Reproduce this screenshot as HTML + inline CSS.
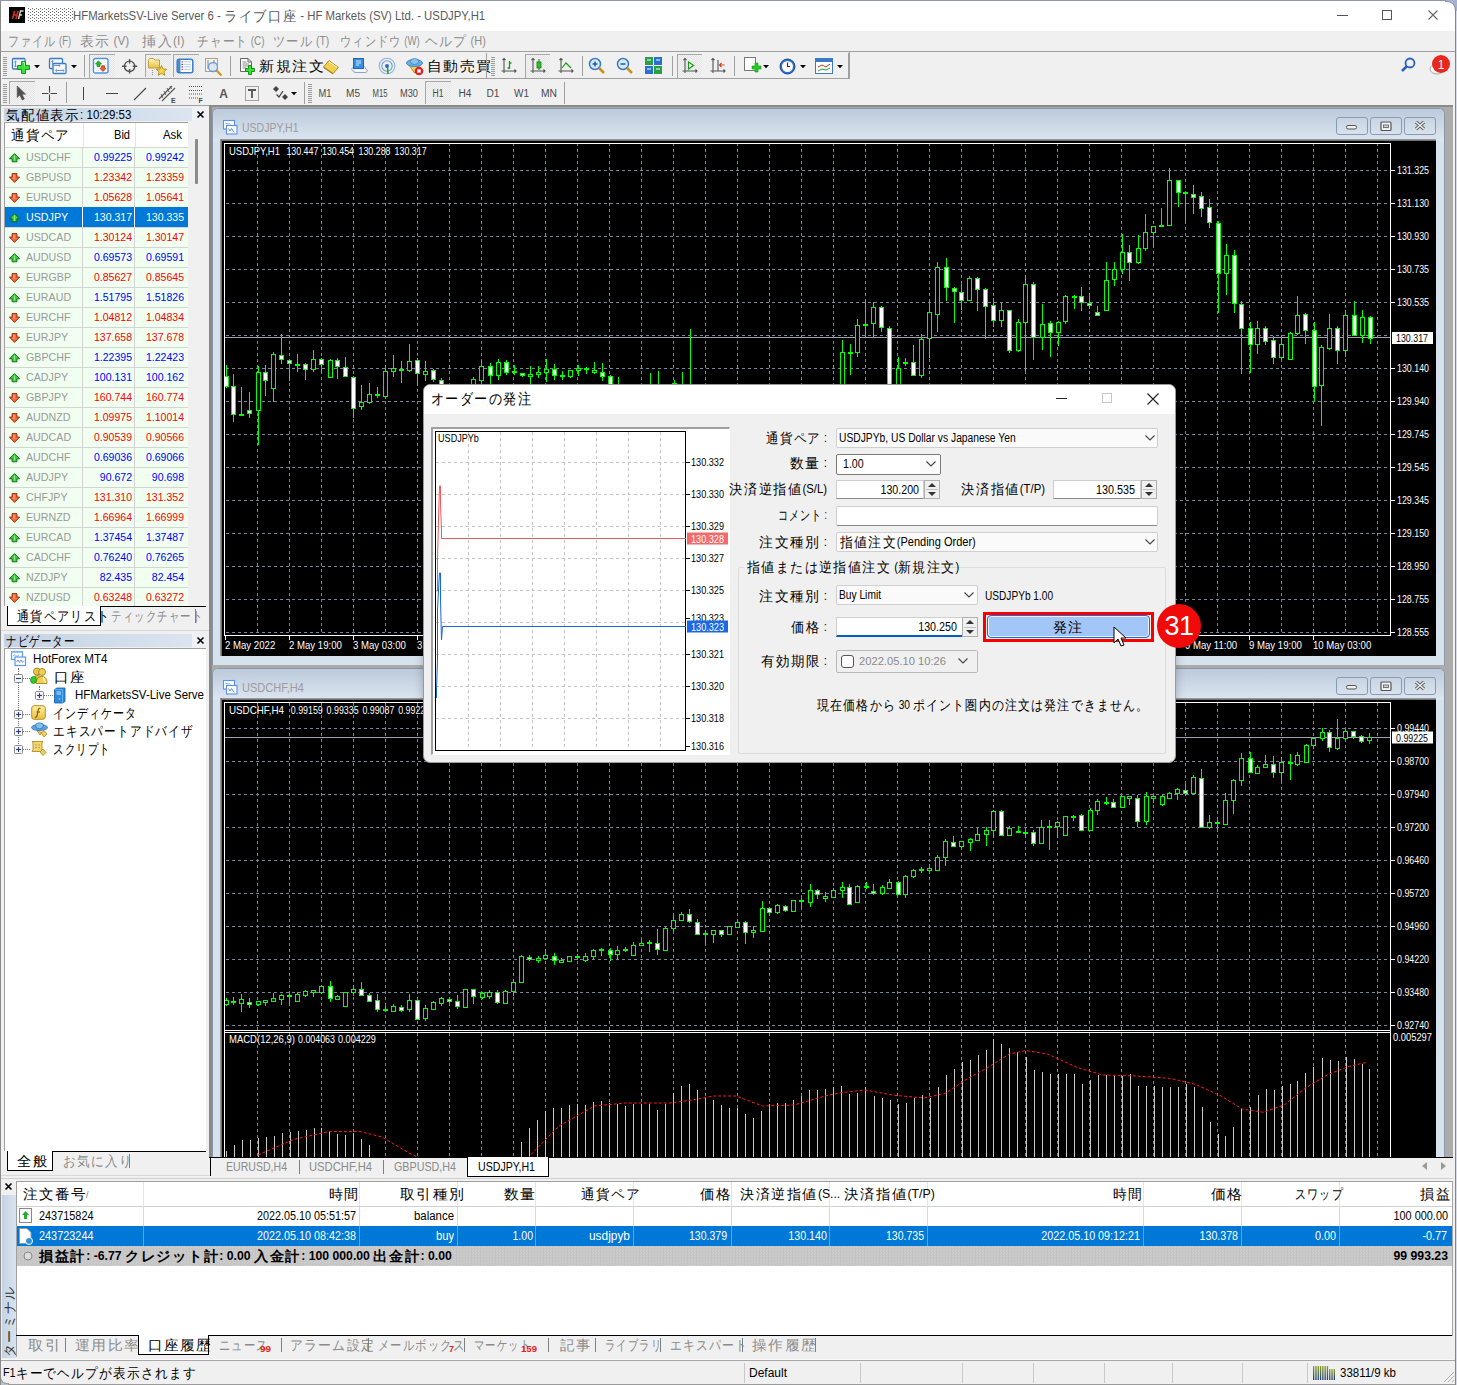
<!DOCTYPE html><html><head><meta charset="utf-8"><style>
*{margin:0;padding:0;box-sizing:border-box}
html,body{width:1457px;height:1385px;overflow:hidden;background:#f0f0f0;font-family:"Liberation Sans",sans-serif;font-size:11px;color:#000}
body>div,.a{position:absolute}
.j{font-size:1.2em;letter-spacing:.1em;vertical-align:-1px}
svg{position:absolute;overflow:visible}
</style></head><body>

<div style="left:0px;top:0px;width:1457px;height:31px;background:#fff"></div>
<div style="left:9px;top:7px;width:16px;height:16px;background:#050505"></div>
<svg style="left:9px;top:7px" width="16" height="16"><path d="M3.5 12L5.5 4M5 8H8M7 12L9 4" stroke="#d83020" stroke-width="1.5" fill="none"/><path d="M9.5 12L11.5 4H14.5M10.5 8H13" stroke="#d8d8d8" stroke-width="1.4" fill="none"/></svg>
<div style="left:28px;top:8px;width:46px;height:15px;background-image:radial-gradient(circle at 0.5px 0.5px,#6a6a6a 0.6px,transparent 0.9px),radial-gradient(circle at 0.5px 0.5px,#6a6a6a 0.6px,transparent 0.9px);background-size:4px 3px,4px 3px;background-position:0 0,2px 1px"></div>
<div style="left:73px;top:8.0px;line-height:16px;white-space:nowrap;transform-origin:0 0;transform:scaleX(0.9474);color:#5a5a5a;font-size:12px">HFMarketsSV-Live Server 6 - <span class="j">ライブ口座</span> - HF Markets (SV) Ltd. - USDJPY,H1</div>
<div style="left:1337px;top:15px;width:11px;height:1px;background:#555"></div>
<div style="left:1382px;top:10px;width:10px;height:10px;border:1px solid #555"></div>
<svg style="left:1427px;top:9px" width="12" height="12"><path d="M1.5 1.5L10.5 10.5M10.5 1.5L1.5 10.5" stroke="#666" stroke-width="1.1"/></svg>
<div style="left:0px;top:51px;width:1457px;height:1px;background:#a0a0a0"></div>
<div style="left:8px;top:33.0px;line-height:16px;white-space:nowrap;transform-origin:0 0;transform:scaleX(0.7839);color:#8d8d8d;font-size:12px"><span class="j">ファイル</span> (F)</div>
<div style="left:80px;top:33.0px;line-height:16px;white-space:nowrap;transform-origin:0 0;transform:scaleX(0.9815);color:#8d8d8d;font-size:12px"><span class="j">表示</span> (V)</div>
<div style="left:142px;top:33.0px;line-height:16px;white-space:nowrap;transform-origin:0 0;transform:scaleX(1.0054);color:#8d8d8d;font-size:12px"><span class="j">挿入</span>(I)</div>
<div style="left:197px;top:33.0px;line-height:16px;white-space:nowrap;transform-origin:0 0;transform:scaleX(0.8267);color:#8d8d8d;font-size:12px"><span class="j">チャート</span> (C)</div>
<div style="left:273px;top:33.0px;line-height:16px;white-space:nowrap;transform-origin:0 0;transform:scaleX(0.8668);color:#8d8d8d;font-size:12px"><span class="j">ツール</span> (T)</div>
<div style="left:340px;top:33.0px;line-height:16px;white-space:nowrap;transform-origin:0 0;transform:scaleX(0.7990);color:#8d8d8d;font-size:12px"><span class="j">ウィンドウ</span> (W)</div>
<div style="left:425px;top:33.0px;line-height:16px;white-space:nowrap;transform-origin:0 0;transform:scaleX(0.9169);color:#8d8d8d;font-size:12px"><span class="j">ヘルプ</span> (H)</div>
<div style="left:0px;top:78px;width:849px;height:1px;background:#a0a0a0"></div>
<div style="left:849px;top:52px;width:1px;height:27px;background:#a0a0a0"></div>
<div style="left:1px;top:52px;width:1px;height:27px;background:#fff"></div>
<svg style="left:3px;top:57px;" width="4" height="20" viewBox="0 0 4 20"><rect x="0" y="0" width="4" height="1" fill="#9a9a9a"/><rect x="0" y="2" width="4" height="1" fill="#9a9a9a"/><rect x="0" y="4" width="4" height="1" fill="#9a9a9a"/><rect x="0" y="6" width="4" height="1" fill="#9a9a9a"/><rect x="0" y="8" width="4" height="1" fill="#9a9a9a"/><rect x="0" y="10" width="4" height="1" fill="#9a9a9a"/><rect x="0" y="12" width="4" height="1" fill="#9a9a9a"/><rect x="0" y="14" width="4" height="1" fill="#9a9a9a"/><rect x="0" y="16" width="4" height="1" fill="#9a9a9a"/><rect x="0" y="18" width="4" height="1" fill="#9a9a9a"/></svg>
<svg style="left:11px;top:57px;" width="20" height="18" viewBox="0 0 20 18"><rect x="1.5" y="1.5" width="12.5" height="10.5" rx="1" fill="#f4f8fd" stroke="#3a7ccc" stroke-width="1.3"/><path d="M2 2.5H13.5" stroke="#9cc0ec"/><path d="M4.5 4V10M3.3 5.2L4.5 4L5.7 5.2M3.3 8.8L4.5 10L5.7 8.8" stroke="#6a8ab8" fill="none" stroke-width=".9"/><path d="M10.5 4.5H14.5V8.5H18.5V12.5H14.5V16.5H10.5V12.5H6.5V8.5H10.5Z" fill="#3ae03a" stroke="#0e8a0e" stroke-width=".9"/><path d="M11.5 5.5H13.5V9.5" stroke="#b0ffb0" stroke-width=".8" fill="none"/></svg>
<svg style="left:34px;top:65px;" width="6" height="4" viewBox="0 0 6 4"><path d="M0 0H6L3 3.2Z" fill="#000"/></svg>
<svg style="left:48px;top:57px;" width="20" height="18" viewBox="0 0 20 18"><rect x="1.5" y="1.5" width="13" height="10" rx="1" fill="#f4f8fd" stroke="#3a7ccc" stroke-width="1.3"/><rect x="5" y="6.5" width="13" height="10" rx="1" fill="#f4f8fd" stroke="#3a7ccc" stroke-width="1.3"/><path d="M4.5 3.5V9M4 8.5H12M10.8 7.3L12 8.5L10.8 9.7M3.3 4.7L4.5 3.5L5.7 4.7" stroke="#6a8ab8" fill="none" stroke-width=".9"/><path d="M7.5 13.5H16M8.7 12.3L7.5 13.5L8.7 14.7M14.8 12.3L16 13.5L14.8 14.7" stroke="#6a8ab8" fill="none" stroke-width=".9"/></svg>
<svg style="left:71px;top:65px;" width="6" height="4" viewBox="0 0 6 4"><path d="M0 0H6L3 3.2Z" fill="#000"/></svg>
<div style="left:84px;top:55px;width:1px;height:22px;background:#a0a0a0"></div>
<div style="left:89px;top:54px;width:26px;height:24px;border-top:1px solid #a8a8a8;border-left:1px solid #a8a8a8;background:repeating-conic-gradient(#f4f4f4 0 25%,#e4e4e4 0 50%) 0 0/2px 2px"></div>
<svg style="left:92px;top:57px;" width="18" height="18" viewBox="0 0 18 18"><rect x="1.5" y="1.5" width="14.5" height="14.5" rx="2" fill="#fff" stroke="#4a94e4" stroke-width="1.4"/><path d="M9 5H14M9 8H14M4 11H14M4 13.5H14" stroke="#dde4ec" stroke-width=".8"/><path d="M6.5 3.8L9.5 7H8V9.5H5V7H3.5Z" fill="#2ab82a" stroke="#138a13" stroke-width=".7"/><path d="M11 14.5L14 11.3H12.5V8.8H9.5V11.3H8Z" fill="#f05a30" stroke="#c03010" stroke-width=".7"/></svg>
<svg style="left:121px;top:58px;" width="18" height="18" viewBox="0 0 18 18"><circle cx="8.6" cy="8.3" r="5.2" fill="none" stroke="#505050" stroke-width="1.4"/><path d="M8.6 1V5.5M8.6 11V15.5M1 8.3H5.5M11.7 8.3H16.2" stroke="#505050" stroke-width="1.4"/></svg>
<div style="left:145px;top:54px;width:26px;height:23px;border-top:1px solid #a8a8a8;border-left:1px solid #a8a8a8;background:repeating-conic-gradient(#f4f4f4 0 25%,#e4e4e4 0 50%) 0 0/2px 2px"></div>
<svg style="left:147px;top:57px;" width="22" height="19" viewBox="0 0 22 19"><defs><linearGradient id="fg" x1="0" y1="0" x2="0" y2="1"><stop offset="0" stop-color="#fff4b8"/><stop offset="1" stop-color="#e8c040"/></linearGradient></defs><path d="M1.5 3.5C1.5 2.5 2 1.5 3 1.5H6.5L8 3H12.5V11H1.5Z" fill="url(#fg)" stroke="#b89838" stroke-width=".9"/><path d="M14.5 8.5L16 12L19.8 12.3L16.9 14.7L17.8 18.3L14.5 16.3L11.2 18.3L12.1 14.7L9.2 12.3L13 12Z" fill="#f5d848" stroke="#b08820" stroke-width=".9"/><path d="M5.5 13V13.5M5.5 15V15.5M5.5 17V17.5" stroke="#333"/></svg>
<div style="left:173px;top:54px;width:26px;height:23px;border-top:1px solid #a8a8a8;border-left:1px solid #a8a8a8;background:repeating-conic-gradient(#f4f4f4 0 25%,#e4e4e4 0 50%) 0 0/2px 2px"></div>
<svg style="left:176px;top:58px;" width="18" height="16" viewBox="0 0 18 16"><rect x="1.2" y="1.2" width="15.6" height="13.6" rx="2" fill="#fff" stroke="#3a7cc8" stroke-width="1.5"/><rect x="2" y="2" width="2.5" height="12" fill="#4a8ad0"/><path d="M7.5 3.8H15M7.5 6.3H15M7.5 8.8H15M7.5 11.3H15" stroke="#a8c8ec" stroke-width=".9"/><rect x="5.6" y="3.3" width="1.2" height="1.2" fill="#e82020"/><rect x="5.6" y="5.8" width="1.2" height="1.2" fill="#222"/><rect x="5.6" y="8.3" width="1.2" height="1.2" fill="#222"/><rect x="5.6" y="10.8" width="1.2" height="1.2" fill="#e82020"/></svg>
<svg style="left:204px;top:57px;" width="20" height="20" viewBox="0 0 20 20"><rect x="1.5" y="1.5" width="12" height="13" fill="#f6f2ec" stroke="#b0a088"/><path d="M4 3V12M10 3V10" stroke="#777" stroke-width=".9"/><circle cx="9" cy="10" r="4.5" fill="#dbe8f6" fill-opacity=".85" stroke="#6a9ad8" stroke-width="1.3"/><path d="M12.3 13.3L17.5 18.5" stroke="#c89a20" stroke-width="2.2"/></svg>
<div style="left:230px;top:56px;width:1px;height:20px;background:#a0a0a0"></div>
<svg style="left:239px;top:57px;" width="19" height="20" viewBox="0 0 19 20"><path d="M1.5 1.5H9L12.5 5V14.5H1.5Z" fill="#fafafa" stroke="#6a6a6a"/><path d="M9 1.5V5H12.5" fill="none" stroke="#6a6a6a"/><path d="M3.5 5H7.5M3.5 7H10M3.5 9H10M3.5 11H7" stroke="#777" stroke-width=".8"/><path d="M9.5 8.5H12.5V11.5H15.5V14.5H12.5V17.5H9.5V14.5H6.5V11.5H9.5Z" fill="#3ae03a" stroke="#0e8a0e" stroke-width=".9"/></svg>
<div style="left:258.5px;top:58.0px;line-height:16px;white-space:nowrap;transform-origin:0 0;transform:scaleX(1.0723);font-size:12px;color:#000"><span class="j">新規注文</span></div>
<svg style="left:322px;top:58px;" width="18" height="17" viewBox="0 0 18 17"><path d="M1.5 9L7 2.5L16.5 9.5L11 15.5Z" fill="#f0d050" stroke="#a07818" stroke-width=".9"/><path d="M1.5 9L11 15.5L11 16.5L1.5 10Z" fill="#a87818"/><path d="M7 3.5L15 9.3" stroke="#fff6c0" stroke-width="1"/></svg>
<svg style="left:350px;top:57px;" width="19" height="19" viewBox="0 0 19 19"><path d="M4 14C1 14 1 10.5 4 10.5C4.5 8 9 8 10 10C12 8.5 16 9.5 15.5 12C18 12 18 15.5 15 15.5H4.5Z" fill="#f0f4fa" stroke="#8a9cb8" stroke-width=".9"/><rect x="3.5" y="1.5" width="10" height="10" fill="#3a90e0" stroke="#1a5aa8" stroke-width=".9"/><path d="M6 4H11M6 6H11M6 8H9" stroke="#e8f2ff" stroke-width=".9"/></svg>
<svg style="left:378px;top:57px;" width="18" height="18" viewBox="0 0 18 18"><circle cx="9" cy="9" r="7.8" fill="none" stroke="#8ab4e0" stroke-width="1.1"/><circle cx="9" cy="9" r="5.2" fill="none" stroke="#6a9ad0" stroke-width="1.1"/><circle cx="9" cy="9" r="2" fill="#2a70c8"/><path d="M9.5 10L10 17" stroke="#30a030" stroke-width="1.6"/></svg>
<svg style="left:405px;top:57px;" width="19" height="19" viewBox="0 0 19 19"><path d="M4 8L9.5 16L15 8Z" fill="#f0d060" stroke="#a88020" stroke-width=".9"/><ellipse cx="9.5" cy="6" rx="8" ry="3.5" fill="#68b0e8" stroke="#3a78b8" stroke-width=".9"/><ellipse cx="9.5" cy="4.5" rx="4" ry="3" fill="#88c4f0" stroke="#3a78b8" stroke-width=".7"/><circle cx="14" cy="14" r="4.3" fill="#e02020"/><rect x="12.3" y="12.3" width="3.4" height="3.4" fill="#fff"/></svg>
<div style="left:427px;top:58.0px;line-height:16px;white-space:nowrap;transform-origin:0 0;transform:scaleX(1.0621);font-size:12px;color:#000"><span class="j">自動売買</span></div>
<div style="left:486px;top:53px;width:1px;height:25px;background:#a0a0a0"></div>
<svg style="left:491px;top:57px;" width="4" height="20" viewBox="0 0 4 20"><rect x="0" y="0" width="4" height="1" fill="#9a9a9a"/><rect x="0" y="2" width="4" height="1" fill="#9a9a9a"/><rect x="0" y="4" width="4" height="1" fill="#9a9a9a"/><rect x="0" y="6" width="4" height="1" fill="#9a9a9a"/><rect x="0" y="8" width="4" height="1" fill="#9a9a9a"/><rect x="0" y="10" width="4" height="1" fill="#9a9a9a"/><rect x="0" y="12" width="4" height="1" fill="#9a9a9a"/><rect x="0" y="14" width="4" height="1" fill="#9a9a9a"/><rect x="0" y="16" width="4" height="1" fill="#9a9a9a"/><rect x="0" y="18" width="4" height="1" fill="#9a9a9a"/></svg>
<svg style="left:500px;top:57px;" width="18" height="18" viewBox="0 0 18 18"><path d="M4 1.5V16M1.5 14H16M2.5 3L4 1.5L5.5 3M14.5 12.5L16 14L14.5 15.5" stroke="#555" stroke-width="1.1" fill="none"/><path d="M9.5 4V12M7.5 11H9.5M9.5 6H11.5" stroke="#1a9a1a" stroke-width="1.3"/></svg>
<div style="left:525px;top:54px;width:25px;height:24px;border-top:1px solid #a8a8a8;border-left:1px solid #a8a8a8;background:repeating-conic-gradient(#f4f4f4 0 25%,#e4e4e4 0 50%) 0 0/2px 2px"></div>
<svg style="left:529px;top:57px;" width="18" height="18" viewBox="0 0 18 18"><path d="M4 1.5V16M1.5 14H16M2.5 3L4 1.5L5.5 3M14.5 12.5L16 14L14.5 15.5" stroke="#555" stroke-width="1.1" fill="none"/><rect x="8" y="5" width="4" height="6" fill="#30c030" stroke="#0e7a0e" stroke-width=".8"/><path d="M10 2V5M10 11V13" stroke="#0e7a0e"/></svg>
<svg style="left:557px;top:57px;" width="18" height="18" viewBox="0 0 18 18"><path d="M4 1.5V16M1.5 14H16M2.5 3L4 1.5L5.5 3M14.5 12.5L16 14L14.5 15.5" stroke="#555" stroke-width="1.1" fill="none"/><path d="M5 11L9 6L14 11" stroke="#1a9a1a" fill="none" stroke-width="1.2"/></svg>
<div style="left:582px;top:56px;width:1px;height:20px;background:#a0a0a0"></div>
<svg style="left:588px;top:57px;" width="18" height="18" viewBox="0 0 18 18"><circle cx="7" cy="7" r="5.5" fill="#d8ecfb" stroke="#3a78c8" stroke-width="1.5"/><path d="M4.5 7h5M7 4.5v5" stroke="#1a58b0" stroke-width="1.5"/><path d="M11 11L16 16" stroke="#c8901a" stroke-width="2.5"/></svg>
<svg style="left:616px;top:57px;" width="18" height="18" viewBox="0 0 18 18"><circle cx="7" cy="7" r="5.5" fill="#d8ecfb" stroke="#3a78c8" stroke-width="1.5"/><path d="M4.5 7h5" stroke="#1a58b0" stroke-width="1.5"/><path d="M11 11L16 16" stroke="#c8901a" stroke-width="2.5"/></svg>
<svg style="left:645px;top:57px;" width="18" height="17" viewBox="0 0 18 17"><rect x="0" y="0" width="8" height="8" fill="#28a048"/><rect x="9" y="0" width="8" height="8" fill="#2a70d0"/><rect x="0" y="9" width="8" height="8" fill="#2a70d0"/><rect x="9" y="9" width="8" height="8" fill="#28a048"/><path d="M2 3h4M11 3h4M2 12h4M11 12h4" stroke="#fff"/></svg>
<div style="left:672px;top:56px;width:1px;height:20px;background:#a0a0a0"></div>
<div style="left:677px;top:54px;width:25px;height:24px;border-top:1px solid #a8a8a8;border-left:1px solid #a8a8a8;background:repeating-conic-gradient(#f4f4f4 0 25%,#e4e4e4 0 50%) 0 0/2px 2px"></div>
<svg style="left:681px;top:57px;" width="18" height="18" viewBox="0 0 18 18"><path d="M4 1.5V16M1.5 14H16M2.5 3L4 1.5L5.5 3M14.5 12.5L16 14L14.5 15.5" stroke="#555" stroke-width="1.1" fill="none"/><path d="M7.5 5V12L12.5 8.5Z" fill="#fff" stroke="#1a9a1a" stroke-width="1.2"/></svg>
<svg style="left:709px;top:57px;" width="18" height="18" viewBox="0 0 18 18"><path d="M4 1.5V16M1.5 14H16M2.5 3L4 1.5L5.5 3M14.5 12.5L16 14L14.5 15.5" stroke="#555" stroke-width="1.1" fill="none"/><path d="M9 3V14" stroke="#555" stroke-width="1.1"/><path d="M15.5 8H10.5M12.5 6L10.5 8L12.5 10" stroke="#d04020" stroke-width="1.2" fill="none"/></svg>
<div style="left:734px;top:56px;width:1px;height:20px;background:#a0a0a0"></div>
<svg style="left:744px;top:57px;" width="18" height="18" viewBox="0 0 18 18"><rect x="0.5" y="0.5" width="11" height="13" fill="#fff" stroke="#777"/><path d="M8 9h3V6h3v3h3v3h-3v3h-3v-3H8Z" fill="#22cc22" stroke="#119911" stroke-width=".6"/></svg>
<svg style="left:763px;top:65px;" width="6" height="4" viewBox="0 0 6 4"><path d="M0 0H6L3 3.2Z" fill="#000"/></svg>
<svg style="left:779px;top:58px;" width="17" height="17" viewBox="0 0 17 17"><circle cx="8.5" cy="8.5" r="7.5" fill="#2a70d0" stroke="#1a4a90"/><circle cx="8.5" cy="8.5" r="5.5" fill="#fff"/><path d="M8.5 4.5V8.5H11" stroke="#333" stroke-width="1.2" fill="none"/></svg>
<svg style="left:800px;top:65px;" width="6" height="4" viewBox="0 0 6 4"><path d="M0 0H6L3 3.2Z" fill="#000"/></svg>
<svg style="left:815px;top:58px;" width="18" height="16" viewBox="0 0 18 16"><rect x="0.5" y="0.5" width="17" height="15" fill="#fff" stroke="#3a78c8"/><rect x="1" y="1" width="16" height="3" fill="#3a78c8"/><path d="M3 9L7 7L11 9L15 6" stroke="#c04020" fill="none"/><path d="M3 13L7 11L11 12L15 10" stroke="#20a040" fill="none"/></svg>
<svg style="left:837px;top:65px;" width="6" height="4" viewBox="0 0 6 4"><path d="M0 0H6L3 3.2Z" fill="#000"/></svg>
<div style="left:848px;top:53px;width:1px;height:25px;background:#a0a0a0"></div>
<svg style="left:1400px;top:57px;" width="16" height="16" viewBox="0 0 16 16"><circle cx="10" cy="6" r="4.5" fill="none" stroke="#2a60c0" stroke-width="1.8"/><path d="M7 9L2 14" stroke="#2a60c0" stroke-width="2.5"/></svg>
<svg style="left:1425px;top:54px;" width="28" height="22" viewBox="0 0 28 22"><ellipse cx="12" cy="15" rx="7" ry="5" fill="#f4f4f4" stroke="#aaa"/><circle cx="16" cy="10" r="9" fill="#e8281c"/><text x="16" y="14.5" fill="#fff" font-size="12" font-family="Liberation Sans" text-anchor="middle">1</text></svg>
<div style="left:0px;top:105px;width:1457px;height:1px;background:#a0a0a0"></div>
<svg style="left:3px;top:84px;" width="4" height="19" viewBox="0 0 4 19"><rect x="0" y="0" width="4" height="1" fill="#9a9a9a"/><rect x="0" y="2" width="4" height="1" fill="#9a9a9a"/><rect x="0" y="4" width="4" height="1" fill="#9a9a9a"/><rect x="0" y="6" width="4" height="1" fill="#9a9a9a"/><rect x="0" y="8" width="4" height="1" fill="#9a9a9a"/><rect x="0" y="10" width="4" height="1" fill="#9a9a9a"/><rect x="0" y="12" width="4" height="1" fill="#9a9a9a"/><rect x="0" y="14" width="4" height="1" fill="#9a9a9a"/><rect x="0" y="16" width="4" height="1" fill="#9a9a9a"/><rect x="0" y="18" width="4" height="1" fill="#9a9a9a"/></svg>
<div style="left:9px;top:81px;width:26px;height:23px;border-top:1px solid #a8a8a8;border-left:1px solid #a8a8a8;background:repeating-conic-gradient(#f4f4f4 0 25%,#e4e4e4 0 50%) 0 0/2px 2px"></div>
<svg style="left:16px;top:85px;" width="10" height="16" viewBox="0 0 10 16"><path d="M1.2 1V12.5L3.8 10L6.2 15L8.4 14L6 9.2H9.6Z" fill="#505050" stroke="#505050" stroke-width=".6"/></svg>
<svg style="left:41px;top:85px;" width="17" height="17" viewBox="0 0 17 17"><path d="M8.5 1V7.5M8.5 9.5V16M1 8.5H7.5M9.5 8.5H16" stroke="#444" stroke-width="1.1"/></svg>
<div style="left:66px;top:82px;width:1px;height:21px;background:#a0a0a0"></div>
<div style="left:83px;top:87px;width:1px;height:13px;background:#444"></div>
<div style="left:106px;top:93px;width:12px;height:1px;background:#444"></div>
<svg style="left:133px;top:87px;" width="14" height="14" viewBox="0 0 14 14"><path d="M1 13L13 1" stroke="#444" stroke-width="1.1"/></svg>
<svg style="left:157px;top:84px;" width="22" height="19" viewBox="0 0 22 19"><path d="M2 15L15 2M5 17L18 4" stroke="#555" stroke-width="1.1"/><path d="M4 10L6 14M7 7L9 11M10 4L12 8M13 2L14.5 5" stroke="#555" stroke-width=".9"/><text x="14" y="18.5" font-size="7" font-family="Liberation Sans" font-weight="bold" fill="#444">E</text></svg>
<svg style="left:188px;top:84px;" width="17" height="19" viewBox="0 0 17 19"><path d="M1 2.5H14M1 6.5H14M1 10H14M1 14H10" stroke="#555" stroke-dasharray="1,1"/><text x="10.5" y="18.5" font-size="7" font-family="Liberation Sans" font-weight="bold" fill="#444">F</text></svg>
<div style="left:-76.5px;width:600px;text-align:center;top:86.5px;line-height:14px;white-space:nowrap;transform-origin:50% 0;font-size:12px;color:#555;font-weight:bold">A</div>
<svg style="left:244px;top:85px;" width="16" height="17" viewBox="0 0 16 17"><rect x="1.5" y="1.5" width="13" height="14" fill="none" stroke="#555" stroke-dasharray="1,1"/><path d="M4 5H12M8 5V13" stroke="#555" stroke-width="1.8"/></svg>
<svg style="left:272px;top:85px;" width="17" height="17" viewBox="0 0 17 17"><path d="M4 1L7 4L4 7L1 4Z" fill="#444"/><path d="M13 9L16 12L13 15L10 12Z" fill="#444"/><path d="M4.5 9.5L7 12L11 6" stroke="#444" stroke-width="1.3" fill="none"/></svg>
<svg style="left:291px;top:92px;" width="6" height="4" viewBox="0 0 6 4"><path d="M0 0H6L3 3.2Z" fill="#000"/></svg>
<div style="left:304px;top:82px;width:1px;height:22px;background:#a0a0a0"></div>
<svg style="left:308px;top:84px;" width="4" height="19" viewBox="0 0 4 19"><rect x="0" y="0" width="4" height="1" fill="#9a9a9a"/><rect x="0" y="2" width="4" height="1" fill="#9a9a9a"/><rect x="0" y="4" width="4" height="1" fill="#9a9a9a"/><rect x="0" y="6" width="4" height="1" fill="#9a9a9a"/><rect x="0" y="8" width="4" height="1" fill="#9a9a9a"/><rect x="0" y="10" width="4" height="1" fill="#9a9a9a"/><rect x="0" y="12" width="4" height="1" fill="#9a9a9a"/><rect x="0" y="14" width="4" height="1" fill="#9a9a9a"/><rect x="0" y="16" width="4" height="1" fill="#9a9a9a"/><rect x="0" y="18" width="4" height="1" fill="#9a9a9a"/></svg>
<div style="left:24.5px;width:600px;text-align:center;top:88.0px;line-height:12px;white-space:nowrap;transform-origin:50% 0;transform:scaleX(0.9359);font-size:10px;color:#4a4a4a">M1</div>
<div style="left:53px;width:600px;text-align:center;top:88.0px;line-height:12px;white-space:nowrap;transform-origin:50% 0;transform:scaleX(1.0079);font-size:10px;color:#4a4a4a">M5</div>
<div style="left:79.5px;width:600px;text-align:center;top:88.0px;line-height:12px;white-space:nowrap;transform-origin:50% 0;transform:scaleX(0.7711);font-size:10px;color:#4a4a4a">M15</div>
<div style="left:109px;width:600px;text-align:center;top:88.0px;line-height:12px;white-space:nowrap;transform-origin:50% 0;transform:scaleX(0.9254);font-size:10px;color:#4a4a4a">M30</div>
<div style="left:425px;top:81px;width:26px;height:23px;border-top:1px solid #a8a8a8;border-left:1px solid #a8a8a8;background:repeating-conic-gradient(#f4f4f4 0 25%,#e4e4e4 0 50%) 0 0/2px 2px"></div>
<div style="left:137.5px;width:600px;text-align:center;top:88.0px;line-height:12px;white-space:nowrap;transform-origin:50% 0;transform:scaleX(0.8605);font-size:10px;color:#4a4a4a">H1</div>
<div style="left:164.5px;width:600px;text-align:center;top:88.0px;line-height:12px;white-space:nowrap;transform-origin:50% 0;transform:scaleX(1.0170);font-size:10px;color:#4a4a4a">H4</div>
<div style="left:192.5px;width:600px;text-align:center;top:88.0px;line-height:12px;white-space:nowrap;transform-origin:50% 0;transform:scaleX(1.0170);font-size:10px;color:#4a4a4a">D1</div>
<div style="left:221.5px;width:600px;text-align:center;top:88.0px;line-height:12px;white-space:nowrap;transform-origin:50% 0;transform:scaleX(1.0000);font-size:10px;color:#4a4a4a">W1</div>
<div style="left:249px;width:600px;text-align:center;top:88.0px;line-height:12px;white-space:nowrap;transform-origin:50% 0;transform:scaleX(1.0288);font-size:10px;color:#4a4a4a">MN</div>
<div style="left:564px;top:82px;width:1px;height:22px;background:#a0a0a0"></div>
<div style="left:4px;top:108px;width:188px;height:13px;background:linear-gradient(90deg,#c4d3e3,#d3dfec 70%,#dbe5f0)"></div>
<div style="left:192px;top:108px;width:14px;height:13px;background:#eef2f7"></div>
<div style="left:6px;top:107.5px;line-height:14px;white-space:nowrap;transform-origin:0 0;transform:scaleX(0.9601);font-size:12px;color:#000"><span class="j">気配値表示</span>: 10:29:53</div>
<svg style="left:197px;top:111px;" width="7" height="7" viewBox="0 0 7 7"><path d="M0.5 0.5L6.5 6.5M6.5 0.5L0.5 6.5" stroke="#000" stroke-width="1.6"/></svg>
<div style="left:4px;top:122px;width:184px;height:485px;background:#fff;border-left:1px solid #a0a0a0;border-top:1px solid #a0a0a0"></div>
<div style="left:83px;top:123px;width:1px;height:24px;background:#e5e5e5"></div>
<div style="left:135px;top:123px;width:1px;height:24px;background:#e5e5e5"></div>
<div style="left:11px;top:127.5px;line-height:14px;white-space:nowrap;transform-origin:0 0;transform:scaleX(0.9600);font-size:12px"><span class="j">通貨ペア</span></div>
<div style="left:-470.5px;width:600px;text-align:right;top:127.5px;line-height:14px;white-space:nowrap;transform-origin:100% 0;transform:scaleX(0.9225);font-size:12px">Bid</div>
<div style="left:-418px;width:600px;text-align:right;top:127.5px;line-height:14px;white-space:nowrap;transform-origin:100% 0;transform:scaleX(0.9498);font-size:12px">Ask</div>
<div style="left:195px;top:139px;width:3px;height:45px;background:#8a8a8a;border-radius:1px"></div>
<div style="left:5px;top:147px;width:183px;height:20px;background:#f0fff0"></div>
<div style="left:5px;top:147px;width:183px;height:1px;background:#d4d4d4"></div>
<div style="left:82px;top:147px;width:1px;height:20px;background:#d4d4d4"></div>
<div style="left:134px;top:147px;width:1px;height:20px;background:#d4d4d4"></div>
<svg style="left:9px;top:152.5px;" width="11" height="10" viewBox="0 0 11 10"><path d="M5.5 0.6L10.6 5.8H7.9V8.8H3.1V5.8H0.4Z" fill="#3ecc3e" stroke="#0a640a" stroke-width=".9"/><path d="M5.5 2.5V7.5" stroke="#90f090" stroke-width="1"/></svg>
<div style="left:25.5px;top:149.6px;line-height:14px;white-space:nowrap;transform-origin:0 0;transform:scaleX(0.9287);font-size:11.5px;color:#9a9a9a">USDCHF</div>
<div style="left:-468.5px;width:600px;text-align:right;top:149.6px;line-height:14px;white-space:nowrap;transform-origin:100% 0;transform:scaleX(0.9142);font-size:11.5px;color:#0000ff">0.99225</div>
<div style="left:-416.5px;width:600px;text-align:right;top:149.6px;line-height:14px;white-space:nowrap;transform-origin:100% 0;transform:scaleX(0.9142);font-size:11.5px;color:#0000ff">0.99242</div>
<div style="left:5px;top:167px;width:183px;height:20px;background:#f0fff0"></div>
<div style="left:5px;top:167px;width:183px;height:1px;background:#d4d4d4"></div>
<div style="left:82px;top:167px;width:1px;height:20px;background:#d4d4d4"></div>
<div style="left:134px;top:167px;width:1px;height:20px;background:#d4d4d4"></div>
<svg style="left:9px;top:172.5px;" width="11" height="10" viewBox="0 0 11 10"><path d="M3.1 0.6H7.9V4.1H10.6L5.5 9.4L0.4 4.1H3.1Z" fill="#f86a38" stroke="#8a2000" stroke-width=".9"/><path d="M5 1.5V6" stroke="#ffb090" stroke-width="1"/></svg>
<div style="left:25.5px;top:169.6px;line-height:14px;white-space:nowrap;transform-origin:0 0;transform:scaleX(0.9287);font-size:11.5px;color:#9a9a9a">GBPUSD</div>
<div style="left:-468.5px;width:600px;text-align:right;top:169.6px;line-height:14px;white-space:nowrap;transform-origin:100% 0;transform:scaleX(0.9142);font-size:11.5px;color:#ff0000">1.23342</div>
<div style="left:-416.5px;width:600px;text-align:right;top:169.6px;line-height:14px;white-space:nowrap;transform-origin:100% 0;transform:scaleX(0.9142);font-size:11.5px;color:#ff0000">1.23359</div>
<div style="left:5px;top:187px;width:183px;height:20px;background:#f0fff0"></div>
<div style="left:5px;top:187px;width:183px;height:1px;background:#d4d4d4"></div>
<div style="left:82px;top:187px;width:1px;height:20px;background:#d4d4d4"></div>
<div style="left:134px;top:187px;width:1px;height:20px;background:#d4d4d4"></div>
<svg style="left:9px;top:192.5px;" width="11" height="10" viewBox="0 0 11 10"><path d="M3.1 0.6H7.9V4.1H10.6L5.5 9.4L0.4 4.1H3.1Z" fill="#f86a38" stroke="#8a2000" stroke-width=".9"/><path d="M5 1.5V6" stroke="#ffb090" stroke-width="1"/></svg>
<div style="left:25.5px;top:189.6px;line-height:14px;white-space:nowrap;transform-origin:0 0;transform:scaleX(0.9287);font-size:11.5px;color:#9a9a9a">EURUSD</div>
<div style="left:-468.5px;width:600px;text-align:right;top:189.6px;line-height:14px;white-space:nowrap;transform-origin:100% 0;transform:scaleX(0.9142);font-size:11.5px;color:#ff0000">1.05628</div>
<div style="left:-416.5px;width:600px;text-align:right;top:189.6px;line-height:14px;white-space:nowrap;transform-origin:100% 0;transform:scaleX(0.9142);font-size:11.5px;color:#ff0000">1.05641</div>
<div style="left:5px;top:207px;width:183px;height:20px;background:#0078d7"></div>
<div style="left:82px;top:207px;width:1px;height:20px;background:#fff"></div>
<div style="left:134px;top:207px;width:1px;height:20px;background:#fff"></div>
<svg style="left:9px;top:212.5px;" width="11" height="10" viewBox="0 0 11 10"><path d="M5.5 0.6L10.6 5.8H7.9V8.8H3.1V5.8H0.4Z" fill="#3ecc3e" stroke="#0a640a" stroke-width=".9"/><path d="M5.5 2.5V7.5" stroke="#90f090" stroke-width="1"/></svg>
<div style="left:25.5px;top:209.6px;line-height:14px;white-space:nowrap;transform-origin:0 0;transform:scaleX(0.9287);font-size:11.5px;color:#fff">USDJPY</div>
<div style="left:-468.5px;width:600px;text-align:right;top:209.6px;line-height:14px;white-space:nowrap;transform-origin:100% 0;transform:scaleX(0.9142);font-size:11.5px;color:#fff">130.317</div>
<div style="left:-416.5px;width:600px;text-align:right;top:209.6px;line-height:14px;white-space:nowrap;transform-origin:100% 0;transform:scaleX(0.9142);font-size:11.5px;color:#fff">130.335</div>
<div style="left:5px;top:227px;width:183px;height:20px;background:#f0fff0"></div>
<div style="left:5px;top:227px;width:183px;height:1px;background:#d4d4d4"></div>
<div style="left:82px;top:227px;width:1px;height:20px;background:#d4d4d4"></div>
<div style="left:134px;top:227px;width:1px;height:20px;background:#d4d4d4"></div>
<svg style="left:9px;top:232.5px;" width="11" height="10" viewBox="0 0 11 10"><path d="M3.1 0.6H7.9V4.1H10.6L5.5 9.4L0.4 4.1H3.1Z" fill="#f86a38" stroke="#8a2000" stroke-width=".9"/><path d="M5 1.5V6" stroke="#ffb090" stroke-width="1"/></svg>
<div style="left:25.5px;top:229.6px;line-height:14px;white-space:nowrap;transform-origin:0 0;transform:scaleX(0.9287);font-size:11.5px;color:#9a9a9a">USDCAD</div>
<div style="left:-468.5px;width:600px;text-align:right;top:229.6px;line-height:14px;white-space:nowrap;transform-origin:100% 0;transform:scaleX(0.9142);font-size:11.5px;color:#ff0000">1.30124</div>
<div style="left:-416.5px;width:600px;text-align:right;top:229.6px;line-height:14px;white-space:nowrap;transform-origin:100% 0;transform:scaleX(0.9142);font-size:11.5px;color:#ff0000">1.30147</div>
<div style="left:5px;top:247px;width:183px;height:20px;background:#f0fff0"></div>
<div style="left:5px;top:247px;width:183px;height:1px;background:#d4d4d4"></div>
<div style="left:82px;top:247px;width:1px;height:20px;background:#d4d4d4"></div>
<div style="left:134px;top:247px;width:1px;height:20px;background:#d4d4d4"></div>
<svg style="left:9px;top:252.5px;" width="11" height="10" viewBox="0 0 11 10"><path d="M5.5 0.6L10.6 5.8H7.9V8.8H3.1V5.8H0.4Z" fill="#3ecc3e" stroke="#0a640a" stroke-width=".9"/><path d="M5.5 2.5V7.5" stroke="#90f090" stroke-width="1"/></svg>
<div style="left:25.5px;top:249.60000000000002px;line-height:14px;white-space:nowrap;transform-origin:0 0;transform:scaleX(0.9287);font-size:11.5px;color:#9a9a9a">AUDUSD</div>
<div style="left:-468.5px;width:600px;text-align:right;top:249.60000000000002px;line-height:14px;white-space:nowrap;transform-origin:100% 0;transform:scaleX(0.9142);font-size:11.5px;color:#0000ff">0.69573</div>
<div style="left:-416.5px;width:600px;text-align:right;top:249.60000000000002px;line-height:14px;white-space:nowrap;transform-origin:100% 0;transform:scaleX(0.9142);font-size:11.5px;color:#0000ff">0.69591</div>
<div style="left:5px;top:267px;width:183px;height:20px;background:#f0fff0"></div>
<div style="left:5px;top:267px;width:183px;height:1px;background:#d4d4d4"></div>
<div style="left:82px;top:267px;width:1px;height:20px;background:#d4d4d4"></div>
<div style="left:134px;top:267px;width:1px;height:20px;background:#d4d4d4"></div>
<svg style="left:9px;top:272.5px;" width="11" height="10" viewBox="0 0 11 10"><path d="M3.1 0.6H7.9V4.1H10.6L5.5 9.4L0.4 4.1H3.1Z" fill="#f86a38" stroke="#8a2000" stroke-width=".9"/><path d="M5 1.5V6" stroke="#ffb090" stroke-width="1"/></svg>
<div style="left:25.5px;top:269.6px;line-height:14px;white-space:nowrap;transform-origin:0 0;transform:scaleX(0.9287);font-size:11.5px;color:#9a9a9a">EURGBP</div>
<div style="left:-468.5px;width:600px;text-align:right;top:269.6px;line-height:14px;white-space:nowrap;transform-origin:100% 0;transform:scaleX(0.9142);font-size:11.5px;color:#ff0000">0.85627</div>
<div style="left:-416.5px;width:600px;text-align:right;top:269.6px;line-height:14px;white-space:nowrap;transform-origin:100% 0;transform:scaleX(0.9142);font-size:11.5px;color:#ff0000">0.85645</div>
<div style="left:5px;top:287px;width:183px;height:20px;background:#f0fff0"></div>
<div style="left:5px;top:287px;width:183px;height:1px;background:#d4d4d4"></div>
<div style="left:82px;top:287px;width:1px;height:20px;background:#d4d4d4"></div>
<div style="left:134px;top:287px;width:1px;height:20px;background:#d4d4d4"></div>
<svg style="left:9px;top:292.5px;" width="11" height="10" viewBox="0 0 11 10"><path d="M5.5 0.6L10.6 5.8H7.9V8.8H3.1V5.8H0.4Z" fill="#3ecc3e" stroke="#0a640a" stroke-width=".9"/><path d="M5.5 2.5V7.5" stroke="#90f090" stroke-width="1"/></svg>
<div style="left:25.5px;top:289.6px;line-height:14px;white-space:nowrap;transform-origin:0 0;transform:scaleX(0.9287);font-size:11.5px;color:#9a9a9a">EURAUD</div>
<div style="left:-468.5px;width:600px;text-align:right;top:289.6px;line-height:14px;white-space:nowrap;transform-origin:100% 0;transform:scaleX(0.9142);font-size:11.5px;color:#0000ff">1.51795</div>
<div style="left:-416.5px;width:600px;text-align:right;top:289.6px;line-height:14px;white-space:nowrap;transform-origin:100% 0;transform:scaleX(0.9142);font-size:11.5px;color:#0000ff">1.51826</div>
<div style="left:5px;top:307px;width:183px;height:20px;background:#f0fff0"></div>
<div style="left:5px;top:307px;width:183px;height:1px;background:#d4d4d4"></div>
<div style="left:82px;top:307px;width:1px;height:20px;background:#d4d4d4"></div>
<div style="left:134px;top:307px;width:1px;height:20px;background:#d4d4d4"></div>
<svg style="left:9px;top:312.5px;" width="11" height="10" viewBox="0 0 11 10"><path d="M3.1 0.6H7.9V4.1H10.6L5.5 9.4L0.4 4.1H3.1Z" fill="#f86a38" stroke="#8a2000" stroke-width=".9"/><path d="M5 1.5V6" stroke="#ffb090" stroke-width="1"/></svg>
<div style="left:25.5px;top:309.6px;line-height:14px;white-space:nowrap;transform-origin:0 0;transform:scaleX(0.9287);font-size:11.5px;color:#9a9a9a">EURCHF</div>
<div style="left:-468.5px;width:600px;text-align:right;top:309.6px;line-height:14px;white-space:nowrap;transform-origin:100% 0;transform:scaleX(0.9142);font-size:11.5px;color:#ff0000">1.04812</div>
<div style="left:-416.5px;width:600px;text-align:right;top:309.6px;line-height:14px;white-space:nowrap;transform-origin:100% 0;transform:scaleX(0.9142);font-size:11.5px;color:#ff0000">1.04834</div>
<div style="left:5px;top:327px;width:183px;height:20px;background:#f0fff0"></div>
<div style="left:5px;top:327px;width:183px;height:1px;background:#d4d4d4"></div>
<div style="left:82px;top:327px;width:1px;height:20px;background:#d4d4d4"></div>
<div style="left:134px;top:327px;width:1px;height:20px;background:#d4d4d4"></div>
<svg style="left:9px;top:332.5px;" width="11" height="10" viewBox="0 0 11 10"><path d="M3.1 0.6H7.9V4.1H10.6L5.5 9.4L0.4 4.1H3.1Z" fill="#f86a38" stroke="#8a2000" stroke-width=".9"/><path d="M5 1.5V6" stroke="#ffb090" stroke-width="1"/></svg>
<div style="left:25.5px;top:329.6px;line-height:14px;white-space:nowrap;transform-origin:0 0;transform:scaleX(0.9287);font-size:11.5px;color:#9a9a9a">EURJPY</div>
<div style="left:-468.5px;width:600px;text-align:right;top:329.6px;line-height:14px;white-space:nowrap;transform-origin:100% 0;transform:scaleX(0.9142);font-size:11.5px;color:#ff0000">137.658</div>
<div style="left:-416.5px;width:600px;text-align:right;top:329.6px;line-height:14px;white-space:nowrap;transform-origin:100% 0;transform:scaleX(0.9142);font-size:11.5px;color:#ff0000">137.678</div>
<div style="left:5px;top:347px;width:183px;height:20px;background:#f0fff0"></div>
<div style="left:5px;top:347px;width:183px;height:1px;background:#d4d4d4"></div>
<div style="left:82px;top:347px;width:1px;height:20px;background:#d4d4d4"></div>
<div style="left:134px;top:347px;width:1px;height:20px;background:#d4d4d4"></div>
<svg style="left:9px;top:352.5px;" width="11" height="10" viewBox="0 0 11 10"><path d="M5.5 0.6L10.6 5.8H7.9V8.8H3.1V5.8H0.4Z" fill="#3ecc3e" stroke="#0a640a" stroke-width=".9"/><path d="M5.5 2.5V7.5" stroke="#90f090" stroke-width="1"/></svg>
<div style="left:25.5px;top:349.6px;line-height:14px;white-space:nowrap;transform-origin:0 0;transform:scaleX(0.9287);font-size:11.5px;color:#9a9a9a">GBPCHF</div>
<div style="left:-468.5px;width:600px;text-align:right;top:349.6px;line-height:14px;white-space:nowrap;transform-origin:100% 0;transform:scaleX(0.9142);font-size:11.5px;color:#0000ff">1.22395</div>
<div style="left:-416.5px;width:600px;text-align:right;top:349.6px;line-height:14px;white-space:nowrap;transform-origin:100% 0;transform:scaleX(0.9142);font-size:11.5px;color:#0000ff">1.22423</div>
<div style="left:5px;top:367px;width:183px;height:20px;background:#f0fff0"></div>
<div style="left:5px;top:367px;width:183px;height:1px;background:#d4d4d4"></div>
<div style="left:82px;top:367px;width:1px;height:20px;background:#d4d4d4"></div>
<div style="left:134px;top:367px;width:1px;height:20px;background:#d4d4d4"></div>
<svg style="left:9px;top:372.5px;" width="11" height="10" viewBox="0 0 11 10"><path d="M5.5 0.6L10.6 5.8H7.9V8.8H3.1V5.8H0.4Z" fill="#3ecc3e" stroke="#0a640a" stroke-width=".9"/><path d="M5.5 2.5V7.5" stroke="#90f090" stroke-width="1"/></svg>
<div style="left:25.5px;top:369.6px;line-height:14px;white-space:nowrap;transform-origin:0 0;transform:scaleX(0.9287);font-size:11.5px;color:#9a9a9a">CADJPY</div>
<div style="left:-468.5px;width:600px;text-align:right;top:369.6px;line-height:14px;white-space:nowrap;transform-origin:100% 0;transform:scaleX(0.9142);font-size:11.5px;color:#0000ff">100.131</div>
<div style="left:-416.5px;width:600px;text-align:right;top:369.6px;line-height:14px;white-space:nowrap;transform-origin:100% 0;transform:scaleX(0.9142);font-size:11.5px;color:#0000ff">100.162</div>
<div style="left:5px;top:387px;width:183px;height:20px;background:#f0fff0"></div>
<div style="left:5px;top:387px;width:183px;height:1px;background:#d4d4d4"></div>
<div style="left:82px;top:387px;width:1px;height:20px;background:#d4d4d4"></div>
<div style="left:134px;top:387px;width:1px;height:20px;background:#d4d4d4"></div>
<svg style="left:9px;top:392.5px;" width="11" height="10" viewBox="0 0 11 10"><path d="M3.1 0.6H7.9V4.1H10.6L5.5 9.4L0.4 4.1H3.1Z" fill="#f86a38" stroke="#8a2000" stroke-width=".9"/><path d="M5 1.5V6" stroke="#ffb090" stroke-width="1"/></svg>
<div style="left:25.5px;top:389.6px;line-height:14px;white-space:nowrap;transform-origin:0 0;transform:scaleX(0.9287);font-size:11.5px;color:#9a9a9a">GBPJPY</div>
<div style="left:-468.5px;width:600px;text-align:right;top:389.6px;line-height:14px;white-space:nowrap;transform-origin:100% 0;transform:scaleX(0.9142);font-size:11.5px;color:#ff0000">160.744</div>
<div style="left:-416.5px;width:600px;text-align:right;top:389.6px;line-height:14px;white-space:nowrap;transform-origin:100% 0;transform:scaleX(0.9142);font-size:11.5px;color:#ff0000">160.774</div>
<div style="left:5px;top:407px;width:183px;height:20px;background:#f0fff0"></div>
<div style="left:5px;top:407px;width:183px;height:1px;background:#d4d4d4"></div>
<div style="left:82px;top:407px;width:1px;height:20px;background:#d4d4d4"></div>
<div style="left:134px;top:407px;width:1px;height:20px;background:#d4d4d4"></div>
<svg style="left:9px;top:412.5px;" width="11" height="10" viewBox="0 0 11 10"><path d="M3.1 0.6H7.9V4.1H10.6L5.5 9.4L0.4 4.1H3.1Z" fill="#f86a38" stroke="#8a2000" stroke-width=".9"/><path d="M5 1.5V6" stroke="#ffb090" stroke-width="1"/></svg>
<div style="left:25.5px;top:409.6px;line-height:14px;white-space:nowrap;transform-origin:0 0;transform:scaleX(0.9287);font-size:11.5px;color:#9a9a9a">AUDNZD</div>
<div style="left:-468.5px;width:600px;text-align:right;top:409.6px;line-height:14px;white-space:nowrap;transform-origin:100% 0;transform:scaleX(0.9142);font-size:11.5px;color:#ff0000">1.09975</div>
<div style="left:-416.5px;width:600px;text-align:right;top:409.6px;line-height:14px;white-space:nowrap;transform-origin:100% 0;transform:scaleX(0.9142);font-size:11.5px;color:#ff0000">1.10014</div>
<div style="left:5px;top:427px;width:183px;height:20px;background:#f0fff0"></div>
<div style="left:5px;top:427px;width:183px;height:1px;background:#d4d4d4"></div>
<div style="left:82px;top:427px;width:1px;height:20px;background:#d4d4d4"></div>
<div style="left:134px;top:427px;width:1px;height:20px;background:#d4d4d4"></div>
<svg style="left:9px;top:432.5px;" width="11" height="10" viewBox="0 0 11 10"><path d="M3.1 0.6H7.9V4.1H10.6L5.5 9.4L0.4 4.1H3.1Z" fill="#f86a38" stroke="#8a2000" stroke-width=".9"/><path d="M5 1.5V6" stroke="#ffb090" stroke-width="1"/></svg>
<div style="left:25.5px;top:429.6px;line-height:14px;white-space:nowrap;transform-origin:0 0;transform:scaleX(0.9287);font-size:11.5px;color:#9a9a9a">AUDCAD</div>
<div style="left:-468.5px;width:600px;text-align:right;top:429.6px;line-height:14px;white-space:nowrap;transform-origin:100% 0;transform:scaleX(0.9142);font-size:11.5px;color:#ff0000">0.90539</div>
<div style="left:-416.5px;width:600px;text-align:right;top:429.6px;line-height:14px;white-space:nowrap;transform-origin:100% 0;transform:scaleX(0.9142);font-size:11.5px;color:#ff0000">0.90566</div>
<div style="left:5px;top:447px;width:183px;height:20px;background:#f0fff0"></div>
<div style="left:5px;top:447px;width:183px;height:1px;background:#d4d4d4"></div>
<div style="left:82px;top:447px;width:1px;height:20px;background:#d4d4d4"></div>
<div style="left:134px;top:447px;width:1px;height:20px;background:#d4d4d4"></div>
<svg style="left:9px;top:452.5px;" width="11" height="10" viewBox="0 0 11 10"><path d="M5.5 0.6L10.6 5.8H7.9V8.8H3.1V5.8H0.4Z" fill="#3ecc3e" stroke="#0a640a" stroke-width=".9"/><path d="M5.5 2.5V7.5" stroke="#90f090" stroke-width="1"/></svg>
<div style="left:25.5px;top:449.6px;line-height:14px;white-space:nowrap;transform-origin:0 0;transform:scaleX(0.9287);font-size:11.5px;color:#9a9a9a">AUDCHF</div>
<div style="left:-468.5px;width:600px;text-align:right;top:449.6px;line-height:14px;white-space:nowrap;transform-origin:100% 0;transform:scaleX(0.9142);font-size:11.5px;color:#0000ff">0.69036</div>
<div style="left:-416.5px;width:600px;text-align:right;top:449.6px;line-height:14px;white-space:nowrap;transform-origin:100% 0;transform:scaleX(0.9142);font-size:11.5px;color:#0000ff">0.69066</div>
<div style="left:5px;top:467px;width:183px;height:20px;background:#f0fff0"></div>
<div style="left:5px;top:467px;width:183px;height:1px;background:#d4d4d4"></div>
<div style="left:82px;top:467px;width:1px;height:20px;background:#d4d4d4"></div>
<div style="left:134px;top:467px;width:1px;height:20px;background:#d4d4d4"></div>
<svg style="left:9px;top:472.5px;" width="11" height="10" viewBox="0 0 11 10"><path d="M5.5 0.6L10.6 5.8H7.9V8.8H3.1V5.8H0.4Z" fill="#3ecc3e" stroke="#0a640a" stroke-width=".9"/><path d="M5.5 2.5V7.5" stroke="#90f090" stroke-width="1"/></svg>
<div style="left:25.5px;top:469.6px;line-height:14px;white-space:nowrap;transform-origin:0 0;transform:scaleX(0.9287);font-size:11.5px;color:#9a9a9a">AUDJPY</div>
<div style="left:-468.5px;width:600px;text-align:right;top:469.6px;line-height:14px;white-space:nowrap;transform-origin:100% 0;transform:scaleX(0.9142);font-size:11.5px;color:#0000ff">90.672</div>
<div style="left:-416.5px;width:600px;text-align:right;top:469.6px;line-height:14px;white-space:nowrap;transform-origin:100% 0;transform:scaleX(0.9142);font-size:11.5px;color:#0000ff">90.698</div>
<div style="left:5px;top:487px;width:183px;height:20px;background:#f0fff0"></div>
<div style="left:5px;top:487px;width:183px;height:1px;background:#d4d4d4"></div>
<div style="left:82px;top:487px;width:1px;height:20px;background:#d4d4d4"></div>
<div style="left:134px;top:487px;width:1px;height:20px;background:#d4d4d4"></div>
<svg style="left:9px;top:492.5px;" width="11" height="10" viewBox="0 0 11 10"><path d="M3.1 0.6H7.9V4.1H10.6L5.5 9.4L0.4 4.1H3.1Z" fill="#f86a38" stroke="#8a2000" stroke-width=".9"/><path d="M5 1.5V6" stroke="#ffb090" stroke-width="1"/></svg>
<div style="left:25.5px;top:489.6px;line-height:14px;white-space:nowrap;transform-origin:0 0;transform:scaleX(0.9287);font-size:11.5px;color:#9a9a9a">CHFJPY</div>
<div style="left:-468.5px;width:600px;text-align:right;top:489.6px;line-height:14px;white-space:nowrap;transform-origin:100% 0;transform:scaleX(0.9142);font-size:11.5px;color:#ff0000">131.310</div>
<div style="left:-416.5px;width:600px;text-align:right;top:489.6px;line-height:14px;white-space:nowrap;transform-origin:100% 0;transform:scaleX(0.9142);font-size:11.5px;color:#ff0000">131.352</div>
<div style="left:5px;top:507px;width:183px;height:20px;background:#f0fff0"></div>
<div style="left:5px;top:507px;width:183px;height:1px;background:#d4d4d4"></div>
<div style="left:82px;top:507px;width:1px;height:20px;background:#d4d4d4"></div>
<div style="left:134px;top:507px;width:1px;height:20px;background:#d4d4d4"></div>
<svg style="left:9px;top:512.5px;" width="11" height="10" viewBox="0 0 11 10"><path d="M3.1 0.6H7.9V4.1H10.6L5.5 9.4L0.4 4.1H3.1Z" fill="#f86a38" stroke="#8a2000" stroke-width=".9"/><path d="M5 1.5V6" stroke="#ffb090" stroke-width="1"/></svg>
<div style="left:25.5px;top:509.6px;line-height:14px;white-space:nowrap;transform-origin:0 0;transform:scaleX(0.9287);font-size:11.5px;color:#9a9a9a">EURNZD</div>
<div style="left:-468.5px;width:600px;text-align:right;top:509.6px;line-height:14px;white-space:nowrap;transform-origin:100% 0;transform:scaleX(0.9142);font-size:11.5px;color:#ff0000">1.66964</div>
<div style="left:-416.5px;width:600px;text-align:right;top:509.6px;line-height:14px;white-space:nowrap;transform-origin:100% 0;transform:scaleX(0.9142);font-size:11.5px;color:#ff0000">1.66999</div>
<div style="left:5px;top:527px;width:183px;height:20px;background:#f0fff0"></div>
<div style="left:5px;top:527px;width:183px;height:1px;background:#d4d4d4"></div>
<div style="left:82px;top:527px;width:1px;height:20px;background:#d4d4d4"></div>
<div style="left:134px;top:527px;width:1px;height:20px;background:#d4d4d4"></div>
<svg style="left:9px;top:532.5px;" width="11" height="10" viewBox="0 0 11 10"><path d="M5.5 0.6L10.6 5.8H7.9V8.8H3.1V5.8H0.4Z" fill="#3ecc3e" stroke="#0a640a" stroke-width=".9"/><path d="M5.5 2.5V7.5" stroke="#90f090" stroke-width="1"/></svg>
<div style="left:25.5px;top:529.6px;line-height:14px;white-space:nowrap;transform-origin:0 0;transform:scaleX(0.9287);font-size:11.5px;color:#9a9a9a">EURCAD</div>
<div style="left:-468.5px;width:600px;text-align:right;top:529.6px;line-height:14px;white-space:nowrap;transform-origin:100% 0;transform:scaleX(0.9142);font-size:11.5px;color:#0000ff">1.37454</div>
<div style="left:-416.5px;width:600px;text-align:right;top:529.6px;line-height:14px;white-space:nowrap;transform-origin:100% 0;transform:scaleX(0.9142);font-size:11.5px;color:#0000ff">1.37487</div>
<div style="left:5px;top:547px;width:183px;height:20px;background:#f0fff0"></div>
<div style="left:5px;top:547px;width:183px;height:1px;background:#d4d4d4"></div>
<div style="left:82px;top:547px;width:1px;height:20px;background:#d4d4d4"></div>
<div style="left:134px;top:547px;width:1px;height:20px;background:#d4d4d4"></div>
<svg style="left:9px;top:552.5px;" width="11" height="10" viewBox="0 0 11 10"><path d="M5.5 0.6L10.6 5.8H7.9V8.8H3.1V5.8H0.4Z" fill="#3ecc3e" stroke="#0a640a" stroke-width=".9"/><path d="M5.5 2.5V7.5" stroke="#90f090" stroke-width="1"/></svg>
<div style="left:25.5px;top:549.6px;line-height:14px;white-space:nowrap;transform-origin:0 0;transform:scaleX(0.9287);font-size:11.5px;color:#9a9a9a">CADCHF</div>
<div style="left:-468.5px;width:600px;text-align:right;top:549.6px;line-height:14px;white-space:nowrap;transform-origin:100% 0;transform:scaleX(0.9142);font-size:11.5px;color:#0000ff">0.76240</div>
<div style="left:-416.5px;width:600px;text-align:right;top:549.6px;line-height:14px;white-space:nowrap;transform-origin:100% 0;transform:scaleX(0.9142);font-size:11.5px;color:#0000ff">0.76265</div>
<div style="left:5px;top:567px;width:183px;height:20px;background:#f0fff0"></div>
<div style="left:5px;top:567px;width:183px;height:1px;background:#d4d4d4"></div>
<div style="left:82px;top:567px;width:1px;height:20px;background:#d4d4d4"></div>
<div style="left:134px;top:567px;width:1px;height:20px;background:#d4d4d4"></div>
<svg style="left:9px;top:572.5px;" width="11" height="10" viewBox="0 0 11 10"><path d="M5.5 0.6L10.6 5.8H7.9V8.8H3.1V5.8H0.4Z" fill="#3ecc3e" stroke="#0a640a" stroke-width=".9"/><path d="M5.5 2.5V7.5" stroke="#90f090" stroke-width="1"/></svg>
<div style="left:25.5px;top:569.6px;line-height:14px;white-space:nowrap;transform-origin:0 0;transform:scaleX(0.9287);font-size:11.5px;color:#9a9a9a">NZDJPY</div>
<div style="left:-468.5px;width:600px;text-align:right;top:569.6px;line-height:14px;white-space:nowrap;transform-origin:100% 0;transform:scaleX(0.9142);font-size:11.5px;color:#0000ff">82.435</div>
<div style="left:-416.5px;width:600px;text-align:right;top:569.6px;line-height:14px;white-space:nowrap;transform-origin:100% 0;transform:scaleX(0.9142);font-size:11.5px;color:#0000ff">82.454</div>
<div style="left:5px;top:587px;width:183px;height:20px;background:#f0fff0"></div>
<div style="left:5px;top:587px;width:183px;height:1px;background:#d4d4d4"></div>
<div style="left:82px;top:587px;width:1px;height:20px;background:#d4d4d4"></div>
<div style="left:134px;top:587px;width:1px;height:20px;background:#d4d4d4"></div>
<svg style="left:9px;top:592.5px;" width="11" height="10" viewBox="0 0 11 10"><path d="M3.1 0.6H7.9V4.1H10.6L5.5 9.4L0.4 4.1H3.1Z" fill="#f86a38" stroke="#8a2000" stroke-width=".9"/><path d="M5 1.5V6" stroke="#ffb090" stroke-width="1"/></svg>
<div style="left:25.5px;top:589.6px;line-height:14px;white-space:nowrap;transform-origin:0 0;transform:scaleX(0.9287);font-size:11.5px;color:#9a9a9a">NZDUSD</div>
<div style="left:-468.5px;width:600px;text-align:right;top:589.6px;line-height:14px;white-space:nowrap;transform-origin:100% 0;transform:scaleX(0.9142);font-size:11.5px;color:#ff0000">0.63248</div>
<div style="left:-416.5px;width:600px;text-align:right;top:589.6px;line-height:14px;white-space:nowrap;transform-origin:100% 0;transform:scaleX(0.9142);font-size:11.5px;color:#ff0000">0.63272</div>
<div style="left:4px;top:606px;width:202px;height:22px;background:#f0f0f0"></div>
<div style="left:100px;top:606px;width:106px;height:1px;background:#000"></div>
<div style="left:7px;top:606px;width:94px;height:20px;background:#fff;border:1px solid #000;border-top:none"></div>
<div style="left:17px;top:609.0px;line-height:14px;white-space:nowrap;transform-origin:0 0;transform:scaleX(0.8637);font-size:12px"><span class="j">通貨ペアリスト</span></div>
<div style="left:111px;top:609.0px;line-height:14px;white-space:nowrap;transform-origin:0 0;transform:scaleX(0.7455);font-size:12px;color:#8a8a8a"><span class="j">ティックチャート</span></div>
<div style="left:195px;top:609px;width:1px;height:14px;background:#808080"></div>
<div style="left:0px;top:630px;width:209px;height:1px;background:#d8d8d8"></div>
<div style="left:4px;top:634px;width:188px;height:13px;background:linear-gradient(90deg,#c4d3e3,#d3dfec 70%,#dbe5f0)"></div>
<div style="left:192px;top:634px;width:14px;height:13px;background:#eef2f7"></div>
<div style="left:6px;top:633.5px;line-height:14px;white-space:nowrap;transform-origin:0 0;transform:scaleX(0.7489);font-size:12px;color:#000"><span class="j">ナビゲーター</span></div>
<svg style="left:197px;top:637px;" width="7" height="7" viewBox="0 0 7 7"><path d="M0.5 0.5L6.5 6.5M6.5 0.5L0.5 6.5" stroke="#000" stroke-width="1.6"/></svg>
<div style="left:4px;top:648px;width:202px;height:504px;background:#fff;border-left:1px solid #a0a0a0;border-top:1px solid #a0a0a0"></div>
<div style="left:18px;top:668px;width:1px;height:80px;border-left:1px dotted #777"></div>
<div style="left:39px;top:686px;width:1px;height:8px;border-left:1px dotted #777"></div>
<div style="left:23px;top:678px;width:7px;height:1px;border-top:1px dotted #777"></div>
<div style="left:44px;top:695px;width:9px;height:1px;border-top:1px dotted #777"></div>
<div style="left:23px;top:714px;width:7px;height:1px;border-top:1px dotted #777"></div>
<div style="left:23px;top:731px;width:7px;height:1px;border-top:1px dotted #777"></div>
<div style="left:23px;top:749px;width:7px;height:1px;border-top:1px dotted #777"></div>
<svg style="left:10px;top:650px;" width="17" height="17" viewBox="0 0 17 17"><rect x="1.5" y="1.5" width="11" height="8" fill="#fff" stroke="#5a9ae8" stroke-width="1.2"/><rect x="1.5" y="1.5" width="11" height="1.5" fill="#9cc4f0"/><path d="M3 6L5 4.5L7 6.5L9 5" stroke="#6aa0e0" fill="none" stroke-width=".8"/><rect x="5" y="7" width="10.5" height="8.5" fill="#fff" stroke="#5a9ae8" stroke-width="1.2"/><path d="M6.5 12L8 10L9.5 12.5L11 10L12.5 12.5L14 10.5" stroke="#4a80d0" fill="none" stroke-width=".8"/></svg>
<div style="left:32.5px;top:652.0px;line-height:14px;white-space:nowrap;transform-origin:0 0;transform:scaleX(0.9716);font-size:12px">HotForex MT4</div>
<svg style="left:14px;top:674px;" width="9" height="9" viewBox="0 0 9 9"><rect x="0.5" y="0.5" width="8" height="8" rx="1" fill="#f6f6f6" stroke="#8a8a8a"/><path d="M2 4.5H7" stroke="#2a3a8a" stroke-width="1.1"/></svg>
<svg style="left:30px;top:667px;" width="18" height="18" viewBox="0 0 18 18"><circle cx="7" cy="4.5" r="3.5" fill="#e8c848" stroke="#9a7a18" stroke-width=".8"/><circle cx="12" cy="5" r="3.5" fill="#f0d050" stroke="#9a7a18" stroke-width=".8"/><path d="M2 15C2 10 5 8.5 7.5 8.5C10 8.5 12 10 12 15Z" fill="#e0c040" stroke="#9a7a18" stroke-width=".8"/><path d="M6 16.5C6 11.5 9 9.5 12 9.5C15 9.5 17 11.5 17 16.5Z" fill="#f0d050" stroke="#9a7a18" stroke-width=".8"/><path d="M13 10L15.5 16" stroke="#fff6c8" stroke-width="1.2"/><ellipse cx="3.5" cy="13" rx="3" ry="3.5" fill="#30c830" stroke="#108010" stroke-width=".6"/></svg>
<div style="left:53.5px;top:670.0px;line-height:14px;white-space:nowrap;transform-origin:0 0;transform:scaleX(1.0417);font-size:12px"><span class="j">口座</span></div>
<svg style="left:35px;top:691px;" width="9" height="9" viewBox="0 0 9 9"><rect x="0.5" y="0.5" width="8" height="8" rx="1" fill="#f6f6f6" stroke="#8a8a8a"/><path d="M2 4.5H7" stroke="#2a3a8a" stroke-width="1.1"/><path d="M4.5 2V7" stroke="#2a3a8a" stroke-width="1.1"/></svg>
<svg style="left:53px;top:687px;" width="13" height="17" viewBox="0 0 13 17"><path d="M1.5 2.5L4 1H12V14.5L9.5 16H1.5Z" fill="#2a8ae0" stroke="#1a5aa8" stroke-width=".8"/><path d="M1.5 2.5H9.5V16" fill="none" stroke="#6ab8f8" stroke-width=".8"/><path d="M3.5 5H8M3.5 7H8" stroke="#e0f0ff" stroke-width=".9"/><circle cx="6.5" cy="12" r=".8" fill="#f0d040"/></svg>
<div style="left:75px;top:688.0px;line-height:14px;white-space:nowrap;transform-origin:0 0;transform:scaleX(0.9577);font-size:12px">HFMarketsSV-Live Serve</div>
<svg style="left:14px;top:710px;" width="9" height="9" viewBox="0 0 9 9"><rect x="0.5" y="0.5" width="8" height="8" rx="1" fill="#f6f6f6" stroke="#8a8a8a"/><path d="M2 4.5H7" stroke="#2a3a8a" stroke-width="1.1"/><path d="M4.5 2V7" stroke="#2a3a8a" stroke-width="1.1"/></svg>
<svg style="left:31px;top:705px;" width="15" height="15" viewBox="0 0 15 15"><defs><linearGradient id="gf" x1="0" y1="0" x2="0" y2="1"><stop offset="0" stop-color="#fff0a0"/><stop offset="1" stop-color="#e8c040"/></linearGradient></defs><rect x="0.7" y="0.7" width="13.6" height="13.6" rx="2.5" fill="url(#gf)" stroke="#b89020" stroke-width="1"/><path d="M9.5 3.5C8.5 3 7.5 3.5 7.2 5L6 11C5.7 12 5 12.3 4 12M5.5 7H9" stroke="#7a5a08" stroke-width="1.1" fill="none"/></svg>
<div style="left:53px;top:705.5px;line-height:14px;white-space:nowrap;transform-origin:0 0;transform:scaleX(0.7820);font-size:12px"><span class="j">インディケータ</span></div>
<svg style="left:14px;top:727px;" width="9" height="9" viewBox="0 0 9 9"><rect x="0.5" y="0.5" width="8" height="8" rx="1" fill="#f6f6f6" stroke="#8a8a8a"/><path d="M2 4.5H7" stroke="#2a3a8a" stroke-width="1.1"/><path d="M4.5 2V7" stroke="#2a3a8a" stroke-width="1.1"/></svg>
<svg style="left:31px;top:722px;" width="17" height="17" viewBox="0 0 17 17"><path d="M5 7L9 13L11 11Z" fill="#f0d060" stroke="#a88020" stroke-width=".8"/><path d="M10 11L13 8.5L16 12L13 15Z" fill="#f0d060" stroke="#a88020" stroke-width=".8"/><ellipse cx="8.5" cy="5.5" rx="8" ry="3" fill="#58a8e0" stroke="#2a6aa8" stroke-width=".8"/><ellipse cx="8.5" cy="3.8" rx="4" ry="3" fill="#80c0f0" stroke="#2a6aa8" stroke-width=".7"/></svg>
<div style="left:53px;top:723.5px;line-height:14px;white-space:nowrap;transform-origin:0 0;transform:scaleX(0.8289);font-size:12px"><span class="j">エキスパートアドバイザ</span></div>
<svg style="left:14px;top:745px;" width="9" height="9" viewBox="0 0 9 9"><rect x="0.5" y="0.5" width="8" height="8" rx="1" fill="#f6f6f6" stroke="#8a8a8a"/><path d="M2 4.5H7" stroke="#2a3a8a" stroke-width="1.1"/><path d="M4.5 2V7" stroke="#2a3a8a" stroke-width="1.1"/></svg>
<svg style="left:31px;top:740px;" width="16" height="17" viewBox="0 0 16 17"><path d="M1 1.5H12L11 3V10L12 11.5H1L2 10V3Z" fill="#f0d868" stroke="#a88020" stroke-width=".8"/><path d="M4.5 5H5.5M7.5 5H8.5M4.5 7.5H5.5M7.5 7.5H8.5" stroke="#9a5a6a" stroke-width="1"/><path d="M9 12L12 9L15 12.5L12 15.5Z" fill="#f0d060" stroke="#a88020" stroke-width=".8"/></svg>
<div style="left:53px;top:741.5px;line-height:14px;white-space:nowrap;transform-origin:0 0;transform:scaleX(0.7516);font-size:12px"><span class="j">スクリプト</span></div>
<div style="left:4px;top:1151px;width:202px;height:22px;background:#f0f0f0"></div>
<div style="left:52px;top:1151px;width:154px;height:1px;background:#000"></div>
<div style="left:7px;top:1151px;width:46px;height:20px;background:#fff;border:1px solid #000;border-top:none"></div>
<div style="left:17.4px;top:1154.0px;line-height:14px;white-space:nowrap;transform-origin:0 0;transform:scaleX(1.0212);font-size:12px"><span class="j">全般</span></div>
<div style="left:63px;top:1154.0px;line-height:14px;white-space:nowrap;transform-origin:0 0;transform:scaleX(0.8987);font-size:12px;color:#8a8a8a"><span class="j">お気に入り</span></div>
<div style="left:129px;top:1154px;width:1px;height:14px;background:#808080"></div>
<div style="left:0px;top:1175px;width:209px;height:1px;background:#d8d8d8"></div>
<div style="left:209px;top:105px;width:1244px;height:1053px;background:#ababab"></div>
<div style="left:209px;top:105px;width:3px;height:1053px;background:#8a8a8a"></div>
<div style="left:209px;top:105px;width:1244px;height:2px;background:#8a8a8a"></div>
<div style="left:212px;top:108px;width:1233px;height:557px;background:#d6e2ee;border-radius:6px 6px 0 0;border:1px solid #8898a8;border-bottom:none"></div>
<div style="left:213px;top:109px;width:1231px;height:32px;background:linear-gradient(#bccadb,#dce6f1);border-radius:5px 5px 0 0"></div>
<svg style="left:222px;top:119px;" width="17" height="17" viewBox="0 0 17 17"><rect x="1.5" y="1.5" width="11" height="8.5" fill="#fff" stroke="#5a90f0" stroke-width="1.1"/><path d="M3.5 5L4.5 4L6 5.5M6.5 4L8 5.5" stroke="#5a90f0" fill="none" stroke-width="1"/><rect x="4.5" y="6.5" width="10.5" height="8.5" fill="#fff" stroke="#5a90f0" stroke-width="1.1"/><path d="M6.5 9.5L8 12L9.5 9.5L11 12L12.5 13" stroke="#5a90f0" fill="none" stroke-width="1"/></svg>
<div style="left:242px;top:119.8px;line-height:16px;white-space:nowrap;transform-origin:0 0;transform:scaleX(0.8413);font-size:12.5px;color:#a09a9a">USDJPY,H1</div>
<div style="left:1336px;top:117px;width:32px;height:18px;border:1px solid #8a9ab5;border-radius:3px;background:linear-gradient(#c8d4e2,#d8e2ee)"></div>
<svg style="left:1346px;top:125px;" width="12" height="5" viewBox="0 0 12 5"><rect x="0.5" y="0.5" width="10" height="3.5" rx="1.5" fill="#f0f0f0" stroke="#555"/></svg>
<div style="left:1370px;top:117px;width:32px;height:18px;border:1px solid #8a9ab5;border-radius:3px;background:linear-gradient(#c8d4e2,#d8e2ee)"></div>
<svg style="left:1380px;top:121px;" width="12" height="10" viewBox="0 0 12 10"><rect x="1" y="1" width="10" height="8.5" rx="1" fill="#f0f0f0" stroke="#555" stroke-width="1.2"/><rect x="3.5" y="4" width="5" height="2.5" fill="#c8d4e2" stroke="#555" stroke-width=".8"/></svg>
<div style="left:1404px;top:117px;width:32px;height:18px;border:1px solid #8a9ab5;border-radius:3px;background:linear-gradient(#c8d4e2,#d8e2ee)"></div>
<svg style="left:1414px;top:120px;" width="12" height="11" viewBox="0 0 12 11"><path d="M2 2L10 9M10 2L2 9" stroke="#555" stroke-width="3.2"/><path d="M2 2L10 9M10 2L2 9" stroke="#eee" stroke-width="1.6"/></svg>
<div style="left:220px;top:139px;width:1216px;height:2px;background:linear-gradient(#a8a8a8,#606060)"></div>
<div style="left:220px;top:139px;width:2px;height:517px;background:linear-gradient(90deg,#a8a8a8,#606060)"></div>
<div style="left:222px;top:141px;width:1214px;height:515px;background:#000"></div>
<div style="left:212px;top:668px;width:1233px;height:489px;background:#d6e2ee;border-radius:6px 6px 0 0;border:1px solid #8898a8;border-bottom:none"></div>
<div style="left:213px;top:669px;width:1231px;height:31px;background:linear-gradient(#bccadb,#dce6f1);border-radius:5px 5px 0 0"></div>
<svg style="left:222px;top:679px;" width="17" height="17" viewBox="0 0 17 17"><rect x="1.5" y="1.5" width="11" height="8.5" fill="#fff" stroke="#5a90f0" stroke-width="1.1"/><path d="M3.5 5L4.5 4L6 5.5M6.5 4L8 5.5" stroke="#5a90f0" fill="none" stroke-width="1"/><rect x="4.5" y="6.5" width="10.5" height="8.5" fill="#fff" stroke="#5a90f0" stroke-width="1.1"/><path d="M6.5 9.5L8 12L9.5 9.5L11 12L12.5 13" stroke="#5a90f0" fill="none" stroke-width="1"/></svg>
<div style="left:242px;top:679.8px;line-height:16px;white-space:nowrap;transform-origin:0 0;transform:scaleX(0.8838);font-size:12.5px;color:#a09a9a">USDCHF,H4</div>
<div style="left:1336px;top:677px;width:32px;height:18px;border:1px solid #8a9ab5;border-radius:3px;background:linear-gradient(#c8d4e2,#d8e2ee)"></div>
<svg style="left:1346px;top:685px;" width="12" height="5" viewBox="0 0 12 5"><rect x="0.5" y="0.5" width="10" height="3.5" rx="1.5" fill="#f0f0f0" stroke="#555"/></svg>
<div style="left:1370px;top:677px;width:32px;height:18px;border:1px solid #8a9ab5;border-radius:3px;background:linear-gradient(#c8d4e2,#d8e2ee)"></div>
<svg style="left:1380px;top:681px;" width="12" height="10" viewBox="0 0 12 10"><rect x="1" y="1" width="10" height="8.5" rx="1" fill="#f0f0f0" stroke="#555" stroke-width="1.2"/><rect x="3.5" y="4" width="5" height="2.5" fill="#c8d4e2" stroke="#555" stroke-width=".8"/></svg>
<div style="left:1404px;top:677px;width:32px;height:18px;border:1px solid #8a9ab5;border-radius:3px;background:linear-gradient(#c8d4e2,#d8e2ee)"></div>
<svg style="left:1414px;top:680px;" width="12" height="11" viewBox="0 0 12 11"><path d="M2 2L10 9M10 2L2 9" stroke="#555" stroke-width="3.2"/><path d="M2 2L10 9M10 2L2 9" stroke="#eee" stroke-width="1.6"/></svg>
<div style="left:220px;top:698px;width:1216px;height:2px;background:linear-gradient(#a8a8a8,#606060)"></div>
<div style="left:220px;top:698px;width:2px;height:459px;background:linear-gradient(90deg,#a8a8a8,#606060)"></div>
<div style="left:222px;top:700px;width:1214px;height:457px;background:#000"></div>
<div style="left:212px;top:665px;width:1233px;height:3px;background:#ababab"></div>
<svg style="left:222px;top:140px" width="1215" height="516" viewBox="222 140 1215 516"><g font-family="Liberation Sans"><g stroke="#778899" stroke-dasharray="3,3" shape-rendering="crispEdges"><line x1="257.5" y1="143" x2="257.5" y2="635"/><line x1="289.5" y1="143" x2="289.5" y2="635"/><line x1="321.5" y1="143" x2="321.5" y2="635"/><line x1="353.5" y1="143" x2="353.5" y2="635"/><line x1="385.5" y1="143" x2="385.5" y2="635"/><line x1="417.5" y1="143" x2="417.5" y2="635"/><line x1="449.5" y1="143" x2="449.5" y2="635"/><line x1="481.5" y1="143" x2="481.5" y2="635"/><line x1="513.5" y1="143" x2="513.5" y2="635"/><line x1="545.5" y1="143" x2="545.5" y2="635"/><line x1="577.5" y1="143" x2="577.5" y2="635"/><line x1="609.5" y1="143" x2="609.5" y2="635"/><line x1="641.5" y1="143" x2="641.5" y2="635"/><line x1="673.5" y1="143" x2="673.5" y2="635"/><line x1="705.5" y1="143" x2="705.5" y2="635"/><line x1="737.5" y1="143" x2="737.5" y2="635"/><line x1="769.5" y1="143" x2="769.5" y2="635"/><line x1="801.5" y1="143" x2="801.5" y2="635"/><line x1="833.5" y1="143" x2="833.5" y2="635"/><line x1="865.5" y1="143" x2="865.5" y2="635"/><line x1="897.5" y1="143" x2="897.5" y2="635"/><line x1="929.5" y1="143" x2="929.5" y2="635"/><line x1="961.5" y1="143" x2="961.5" y2="635"/><line x1="993.5" y1="143" x2="993.5" y2="635"/><line x1="1025.5" y1="143" x2="1025.5" y2="635"/><line x1="1057.5" y1="143" x2="1057.5" y2="635"/><line x1="1089.5" y1="143" x2="1089.5" y2="635"/><line x1="1121.5" y1="143" x2="1121.5" y2="635"/><line x1="1153.5" y1="143" x2="1153.5" y2="635"/><line x1="1185.5" y1="143" x2="1185.5" y2="635"/><line x1="1217.5" y1="143" x2="1217.5" y2="635"/><line x1="1249.5" y1="143" x2="1249.5" y2="635"/><line x1="1281.5" y1="143" x2="1281.5" y2="635"/><line x1="1313.5" y1="143" x2="1313.5" y2="635"/><line x1="1345.5" y1="143" x2="1345.5" y2="635"/><line x1="1377.5" y1="143" x2="1377.5" y2="635"/><line x1="226" y1="170.5" x2="1390" y2="170.5"/><line x1="226" y1="203.5" x2="1390" y2="203.5"/><line x1="226" y1="236.5" x2="1390" y2="236.5"/><line x1="226" y1="269.5" x2="1390" y2="269.5"/><line x1="226" y1="302.5" x2="1390" y2="302.5"/><line x1="226" y1="335.5" x2="1390" y2="335.5"/><line x1="226" y1="368.5" x2="1390" y2="368.5"/><line x1="226" y1="401.5" x2="1390" y2="401.5"/><line x1="226" y1="434.5" x2="1390" y2="434.5"/><line x1="226" y1="467.5" x2="1390" y2="467.5"/><line x1="226" y1="500.5" x2="1390" y2="500.5"/><line x1="226" y1="533.5" x2="1390" y2="533.5"/><line x1="226" y1="566.5" x2="1390" y2="566.5"/><line x1="226" y1="599.5" x2="1390" y2="599.5"/><line x1="226" y1="632.5" x2="1390" y2="632.5"/></g><line x1="225" y1="337.5" x2="1390" y2="337.5" stroke="#9aa6b4" shape-rendering="crispEdges"/><g stroke="#00ff00" shape-rendering="crispEdges"><line x1="226.5" y1="365" x2="226.5" y2="388"/><line x1="233.5" y1="374" x2="233.5" y2="422"/><line x1="241.5" y1="387" x2="241.5" y2="416"/><line x1="249.5" y1="392" x2="249.5" y2="418"/><line x1="258.5" y1="366" x2="258.5" y2="445"/><line x1="265.5" y1="365" x2="265.5" y2="396"/><line x1="273.5" y1="352" x2="273.5" y2="402"/><line x1="281.5" y1="334" x2="281.5" y2="364"/><line x1="289.5" y1="359" x2="289.5" y2="381"/><line x1="297.5" y1="354" x2="297.5" y2="372"/><line x1="305.5" y1="363" x2="305.5" y2="380"/><line x1="313.5" y1="350" x2="313.5" y2="372"/><line x1="321.5" y1="358" x2="321.5" y2="373"/><line x1="330.5" y1="359" x2="330.5" y2="378"/><line x1="337.5" y1="358" x2="337.5" y2="379"/><line x1="345.5" y1="357" x2="345.5" y2="377"/><line x1="353.5" y1="376" x2="353.5" y2="418"/><line x1="361.5" y1="385" x2="361.5" y2="410"/><line x1="369.5" y1="383" x2="369.5" y2="404"/><line x1="377.5" y1="387" x2="377.5" y2="398"/><line x1="385.5" y1="365" x2="385.5" y2="399"/><line x1="393.5" y1="355" x2="393.5" y2="377"/><line x1="401.5" y1="361" x2="401.5" y2="383"/><line x1="409.5" y1="344" x2="409.5" y2="372"/><line x1="417.5" y1="358" x2="417.5" y2="386"/><line x1="425.5" y1="361" x2="425.5" y2="381"/><line x1="433.5" y1="369" x2="433.5" y2="382"/><line x1="441.5" y1="378" x2="441.5" y2="400"/><line x1="473.5" y1="377" x2="473.5" y2="398"/><line x1="481.5" y1="360" x2="481.5" y2="384"/><line x1="490.5" y1="363" x2="490.5" y2="386"/><line x1="498.5" y1="359" x2="498.5" y2="380"/><line x1="506.5" y1="360" x2="506.5" y2="375"/><line x1="514.5" y1="365" x2="514.5" y2="375"/><line x1="522.5" y1="373" x2="522.5" y2="377"/><line x1="530.5" y1="366" x2="530.5" y2="386"/><line x1="538.5" y1="366" x2="538.5" y2="378"/><line x1="546.5" y1="359" x2="546.5" y2="382"/><line x1="554.5" y1="364" x2="554.5" y2="380"/><line x1="562.5" y1="371" x2="562.5" y2="380"/><line x1="570.5" y1="370" x2="570.5" y2="378"/><line x1="578.5" y1="365" x2="578.5" y2="376"/><line x1="586.5" y1="367" x2="586.5" y2="374"/><line x1="594.5" y1="362" x2="594.5" y2="374"/><line x1="602.5" y1="363" x2="602.5" y2="381"/><line x1="610.5" y1="375" x2="610.5" y2="395"/><line x1="618.5" y1="377" x2="618.5" y2="398"/><line x1="650.5" y1="373" x2="650.5" y2="398"/><line x1="658.5" y1="371" x2="658.5" y2="398"/><line x1="674.5" y1="380" x2="674.5" y2="398"/><line x1="682.5" y1="372" x2="682.5" y2="398"/><line x1="690.5" y1="329" x2="690.5" y2="398"/><line x1="842.5" y1="340" x2="842.5" y2="395"/><line x1="850.5" y1="344" x2="850.5" y2="375"/><line x1="857.5" y1="319" x2="857.5" y2="357"/><line x1="865.5" y1="300" x2="865.5" y2="338"/><line x1="873.5" y1="302" x2="873.5" y2="338"/><line x1="881.5" y1="306" x2="881.5" y2="332"/><line x1="889.5" y1="326" x2="889.5" y2="400"/><line x1="898.5" y1="357" x2="898.5" y2="395"/><line x1="905.5" y1="358" x2="905.5" y2="366"/><line x1="913.5" y1="345" x2="913.5" y2="376"/><line x1="921.5" y1="334" x2="921.5" y2="378"/><line x1="929.5" y1="303" x2="929.5" y2="358"/><line x1="937.5" y1="262" x2="937.5" y2="332"/><line x1="946.5" y1="258" x2="946.5" y2="301"/><line x1="954.5" y1="287" x2="954.5" y2="323"/><line x1="961.5" y1="284" x2="961.5" y2="310"/><line x1="969.5" y1="276" x2="969.5" y2="300"/><line x1="977.5" y1="277" x2="977.5" y2="311"/><line x1="985.5" y1="288" x2="985.5" y2="339"/><line x1="993.5" y1="298" x2="993.5" y2="327"/><line x1="1001.5" y1="303" x2="1001.5" y2="327"/><line x1="1009.5" y1="310" x2="1009.5" y2="353"/><line x1="1018.5" y1="319" x2="1018.5" y2="352"/><line x1="1025.5" y1="275" x2="1025.5" y2="372"/><line x1="1033.5" y1="282" x2="1033.5" y2="360"/><line x1="1042.5" y1="304" x2="1042.5" y2="350"/><line x1="1050.5" y1="321" x2="1050.5" y2="357"/><line x1="1058.5" y1="321" x2="1058.5" y2="346"/><line x1="1065.5" y1="295" x2="1065.5" y2="324"/><line x1="1074.5" y1="295" x2="1074.5" y2="309"/><line x1="1081.5" y1="287" x2="1081.5" y2="311"/><line x1="1089.5" y1="293" x2="1089.5" y2="309"/><line x1="1097.5" y1="306" x2="1097.5" y2="315"/><line x1="1106.5" y1="262" x2="1106.5" y2="310"/><line x1="1114.5" y1="262" x2="1114.5" y2="286"/><line x1="1122.5" y1="234" x2="1122.5" y2="274"/><line x1="1129.5" y1="245" x2="1129.5" y2="281"/><line x1="1138.5" y1="235" x2="1138.5" y2="264"/><line x1="1145.5" y1="214" x2="1145.5" y2="251"/><line x1="1153.5" y1="226" x2="1153.5" y2="247"/><line x1="1161.5" y1="208" x2="1161.5" y2="226"/><line x1="1169.5" y1="168" x2="1169.5" y2="226"/><line x1="1178.5" y1="180" x2="1178.5" y2="207"/><line x1="1185.5" y1="192" x2="1185.5" y2="222"/><line x1="1193.5" y1="185" x2="1193.5" y2="214"/><line x1="1201.5" y1="192" x2="1201.5" y2="217"/><line x1="1209.5" y1="199" x2="1209.5" y2="228"/><line x1="1218.5" y1="221" x2="1218.5" y2="313"/><line x1="1226.5" y1="244" x2="1226.5" y2="295"/><line x1="1234.5" y1="250" x2="1234.5" y2="313"/><line x1="1241.5" y1="301" x2="1241.5" y2="374"/><line x1="1250.5" y1="322" x2="1250.5" y2="373"/><line x1="1257.5" y1="321" x2="1257.5" y2="354"/><line x1="1265.5" y1="326" x2="1265.5" y2="345"/><line x1="1273.5" y1="336" x2="1273.5" y2="364"/><line x1="1281.5" y1="335" x2="1281.5" y2="360"/><line x1="1290.5" y1="332" x2="1290.5" y2="360"/><line x1="1297.5" y1="296" x2="1297.5" y2="335"/><line x1="1305.5" y1="313" x2="1305.5" y2="344"/><line x1="1314.5" y1="322" x2="1314.5" y2="402"/><line x1="1321.5" y1="345" x2="1321.5" y2="426"/><line x1="1329.5" y1="314" x2="1329.5" y2="350"/><line x1="1337.5" y1="326" x2="1337.5" y2="364"/><line x1="1345.5" y1="310" x2="1345.5" y2="357"/><line x1="1354.5" y1="301" x2="1354.5" y2="336"/><line x1="1362.5" y1="310" x2="1362.5" y2="343"/><line x1="1370.5" y1="316" x2="1370.5" y2="344"/><rect x="224.5" y="376.5" width="4" height="10" fill="#fff"/><rect x="231.5" y="386.5" width="4" height="28" fill="#fff"/><rect x="239.5" y="414.5" width="4" height="1" fill="#000"/><rect x="247.5" y="410.5" width="4" height="3" fill="#fff"/><rect x="256.5" y="372.5" width="4" height="38" fill="#000"/><rect x="263.5" y="372.5" width="4" height="8" fill="#fff"/><rect x="271.5" y="354.5" width="4" height="34" fill="#000"/><rect x="279.5" y="355.5" width="4" height="4" fill="#fff"/><rect x="287.5" y="360.5" width="4" height="3" fill="#fff"/><rect x="295.5" y="364.5" width="4" height="1" fill="#000"/><rect x="303.5" y="364.5" width="4" height="5" fill="#fff"/><rect x="311.5" y="359.5" width="4" height="10" fill="#000"/><rect x="319.5" y="359.5" width="4" height="5" fill="#fff"/><rect x="328.5" y="360.5" width="4" height="17" fill="#000"/><rect x="335.5" y="360.5" width="4" height="6" fill="#fff"/><rect x="343.5" y="367.5" width="4" height="9" fill="#fff"/><rect x="351.5" y="377.5" width="4" height="31" fill="#fff"/><rect x="359.5" y="402.5" width="4" height="4" fill="#000"/><rect x="367.5" y="394.5" width="4" height="8" fill="#000"/><rect x="375.5" y="394.5" width="4" height="1" fill="#000"/><rect x="383.5" y="371.5" width="4" height="25" fill="#000"/><rect x="391.5" y="368.5" width="4" height="3" fill="#000"/><rect x="399.5" y="369.5" width="4" height="1" fill="#000"/><rect x="407.5" y="361.5" width="4" height="9" fill="#000"/><rect x="415.5" y="360.5" width="4" height="13" fill="#fff"/><rect x="423.5" y="371.5" width="4" height="3" fill="#000"/><rect x="431.5" y="370.5" width="4" height="9" fill="#fff"/><rect x="439.5" y="380.5" width="4" height="15" fill="#fff"/><rect x="471.5" y="379.5" width="4" height="13" fill="#000"/><rect x="479.5" y="366.5" width="4" height="14" fill="#000"/><rect x="488.5" y="366.5" width="4" height="9" fill="#fff"/><rect x="496.5" y="362.5" width="4" height="13" fill="#000"/><rect x="504.5" y="362.5" width="4" height="10" fill="#fff"/><rect x="512.5" y="371.5" width="4" height="1" fill="#000"/><rect x="520.5" y="373.5" width="4" height="2" fill="#fff"/><rect x="528.5" y="374.5" width="4" height="2" fill="#000"/><rect x="536.5" y="372.5" width="4" height="2" fill="#000"/><rect x="544.5" y="369.5" width="4" height="3" fill="#000"/><rect x="552.5" y="369.5" width="4" height="6" fill="#fff"/><rect x="560.5" y="375.5" width="4" height="1" fill="#000"/><rect x="568.5" y="370.5" width="4" height="6" fill="#000"/><rect x="576.5" y="368.5" width="4" height="2" fill="#000"/><rect x="584.5" y="368.5" width="4" height="1" fill="#000"/><rect x="592.5" y="370.5" width="4" height="2" fill="#000"/><rect x="600.5" y="372.5" width="4" height="4" fill="#fff"/><rect x="608.5" y="376.5" width="4" height="14" fill="#fff"/><rect x="616.5" y="385.5" width="4" height="10" fill="#000"/><rect x="648.5" y="386.5" width="4" height="9" fill="#000"/><rect x="656.5" y="386.5" width="4" height="9" fill="#000"/><rect x="672.5" y="383.5" width="4" height="12" fill="#000"/><rect x="680.5" y="386.5" width="4" height="9" fill="#000"/><rect x="688.5" y="386.5" width="4" height="9" fill="#000"/><rect x="840.5" y="352.5" width="4" height="38" fill="#000"/><rect x="848.5" y="352.5" width="4" height="1" fill="#000"/><rect x="855.5" y="325.5" width="4" height="27" fill="#000"/><rect x="863.5" y="324.5" width="4" height="1" fill="#000"/><rect x="871.5" y="307.5" width="4" height="16" fill="#000"/><rect x="879.5" y="307.5" width="4" height="20" fill="#fff"/><rect x="887.5" y="328.5" width="4" height="67" fill="#fff"/><rect x="896.5" y="368.5" width="4" height="22" fill="#000"/><rect x="903.5" y="362.5" width="4" height="1" fill="#000"/><rect x="911.5" y="362.5" width="4" height="13" fill="#fff"/><rect x="919.5" y="339.5" width="4" height="36" fill="#000"/><rect x="927.5" y="312.5" width="4" height="26" fill="#000"/><rect x="935.5" y="267.5" width="4" height="47" fill="#000"/><rect x="944.5" y="267.5" width="4" height="20" fill="#fff"/><rect x="952.5" y="288.5" width="4" height="3" fill="#fff"/><rect x="959.5" y="292.5" width="4" height="8" fill="#fff"/><rect x="967.5" y="278.5" width="4" height="22" fill="#000"/><rect x="975.5" y="278.5" width="4" height="11" fill="#fff"/><rect x="983.5" y="289.5" width="4" height="17" fill="#fff"/><rect x="991.5" y="305.5" width="4" height="15" fill="#fff"/><rect x="999.5" y="310.5" width="4" height="10" fill="#000"/><rect x="1007.5" y="310.5" width="4" height="40" fill="#fff"/><rect x="1016.5" y="322.5" width="4" height="28" fill="#000"/><rect x="1023.5" y="284.5" width="4" height="38" fill="#000"/><rect x="1031.5" y="284.5" width="4" height="53" fill="#fff"/><rect x="1040.5" y="324.5" width="4" height="13" fill="#000"/><rect x="1048.5" y="323.5" width="4" height="9" fill="#fff"/><rect x="1056.5" y="322.5" width="4" height="10" fill="#000"/><rect x="1063.5" y="296.5" width="4" height="25" fill="#000"/><rect x="1072.5" y="296.5" width="4" height="1" fill="#000"/><rect x="1079.5" y="296.5" width="4" height="6" fill="#fff"/><rect x="1087.5" y="303.5" width="4" height="2" fill="#fff"/><rect x="1095.5" y="312.5" width="4" height="3" fill="#fff"/><rect x="1104.5" y="280.5" width="4" height="30" fill="#000"/><rect x="1112.5" y="269.5" width="4" height="10" fill="#000"/><rect x="1120.5" y="252.5" width="4" height="17" fill="#000"/><rect x="1127.5" y="252.5" width="4" height="10" fill="#fff"/><rect x="1136.5" y="248.5" width="4" height="14" fill="#000"/><rect x="1143.5" y="232.5" width="4" height="16" fill="#000"/><rect x="1151.5" y="226.5" width="4" height="6" fill="#000"/><rect x="1159.5" y="225.5" width="4" height="1" fill="#000"/><rect x="1167.5" y="180.5" width="4" height="45" fill="#000"/><rect x="1176.5" y="180.5" width="4" height="12" fill="#fff"/><rect x="1183.5" y="192.5" width="4" height="1" fill="#000"/><rect x="1191.5" y="194.5" width="4" height="3" fill="#fff"/><rect x="1199.5" y="196.5" width="4" height="12" fill="#fff"/><rect x="1207.5" y="207.5" width="4" height="15" fill="#fff"/><rect x="1216.5" y="223.5" width="4" height="50" fill="#fff"/><rect x="1224.5" y="255.5" width="4" height="18" fill="#000"/><rect x="1232.5" y="255.5" width="4" height="48" fill="#fff"/><rect x="1239.5" y="304.5" width="4" height="24" fill="#fff"/><rect x="1248.5" y="328.5" width="4" height="16" fill="#fff"/><rect x="1255.5" y="328.5" width="4" height="16" fill="#000"/><rect x="1263.5" y="328.5" width="4" height="13" fill="#fff"/><rect x="1271.5" y="340.5" width="4" height="17" fill="#fff"/><rect x="1279.5" y="344.5" width="4" height="13" fill="#000"/><rect x="1288.5" y="333.5" width="4" height="26" fill="#000"/><rect x="1295.5" y="315.5" width="4" height="18" fill="#000"/><rect x="1303.5" y="314.5" width="4" height="16" fill="#fff"/><rect x="1312.5" y="330.5" width="4" height="56" fill="#fff"/><rect x="1319.5" y="347.5" width="4" height="38" fill="#000"/><rect x="1327.5" y="328.5" width="4" height="20" fill="#000"/><rect x="1335.5" y="328.5" width="4" height="22" fill="#fff"/><rect x="1343.5" y="315.5" width="4" height="35" fill="#000"/><rect x="1352.5" y="315.5" width="4" height="20" fill="#fff"/><rect x="1360.5" y="317.5" width="4" height="18" fill="#000"/><rect x="1368.5" y="317.5" width="4" height="21" fill="#fff"/></g><rect x="224.5" y="143.5" width="1166" height="492" fill="none" stroke="#fff" shape-rendering="crispEdges"/><text transform="translate(1397,174.3) scale(0.8854,1)" font-size="10" fill="#fff" text-anchor="start" xml:space="preserve">131.325</text><text transform="translate(1397,207.3) scale(0.8854,1)" font-size="10" fill="#fff" text-anchor="start" xml:space="preserve">131.130</text><text transform="translate(1397,240.3) scale(0.8854,1)" font-size="10" fill="#fff" text-anchor="start" xml:space="preserve">130.930</text><text transform="translate(1397,273.3) scale(0.8854,1)" font-size="10" fill="#fff" text-anchor="start" xml:space="preserve">130.735</text><text transform="translate(1397,306.3) scale(0.8854,1)" font-size="10" fill="#fff" text-anchor="start" xml:space="preserve">130.535</text><text transform="translate(1397,372.3) scale(0.8854,1)" font-size="10" fill="#fff" text-anchor="start" xml:space="preserve">130.140</text><text transform="translate(1397,405.3) scale(0.8854,1)" font-size="10" fill="#fff" text-anchor="start" xml:space="preserve">129.940</text><text transform="translate(1397,438.3) scale(0.8854,1)" font-size="10" fill="#fff" text-anchor="start" xml:space="preserve">129.745</text><text transform="translate(1397,471.3) scale(0.8854,1)" font-size="10" fill="#fff" text-anchor="start" xml:space="preserve">129.545</text><text transform="translate(1397,504.3) scale(0.8854,1)" font-size="10" fill="#fff" text-anchor="start" xml:space="preserve">129.345</text><text transform="translate(1397,537.3) scale(0.8854,1)" font-size="10" fill="#fff" text-anchor="start" xml:space="preserve">129.150</text><text transform="translate(1397,570.3) scale(0.8854,1)" font-size="10" fill="#fff" text-anchor="start" xml:space="preserve">128.950</text><text transform="translate(1397,603.3) scale(0.8854,1)" font-size="10" fill="#fff" text-anchor="start" xml:space="preserve">128.755</text><text transform="translate(1397,636.3) scale(0.8854,1)" font-size="10" fill="#fff" text-anchor="start" xml:space="preserve">128.555</text><g shape-rendering="crispEdges"><line x1="1391" y1="170.5" x2="1395" y2="170.5" stroke="#fff"/><line x1="1391" y1="203.5" x2="1395" y2="203.5" stroke="#fff"/><line x1="1391" y1="236.5" x2="1395" y2="236.5" stroke="#fff"/><line x1="1391" y1="269.5" x2="1395" y2="269.5" stroke="#fff"/><line x1="1391" y1="302.5" x2="1395" y2="302.5" stroke="#fff"/><line x1="1391" y1="368.5" x2="1395" y2="368.5" stroke="#fff"/><line x1="1391" y1="401.5" x2="1395" y2="401.5" stroke="#fff"/><line x1="1391" y1="434.5" x2="1395" y2="434.5" stroke="#fff"/><line x1="1391" y1="467.5" x2="1395" y2="467.5" stroke="#fff"/><line x1="1391" y1="500.5" x2="1395" y2="500.5" stroke="#fff"/><line x1="1391" y1="533.5" x2="1395" y2="533.5" stroke="#fff"/><line x1="1391" y1="566.5" x2="1395" y2="566.5" stroke="#fff"/><line x1="1391" y1="599.5" x2="1395" y2="599.5" stroke="#fff"/><line x1="1391" y1="632.5" x2="1395" y2="632.5" stroke="#fff"/></g><rect x="1392" y="332" width="41" height="12" fill="#fff"/><text transform="translate(1396,342) scale(0.8854,1)" font-size="10" fill="#000" text-anchor="start" xml:space="preserve">130.317</text><line x1="225.5" y1="636" x2="225.5" y2="640" stroke="#fff" shape-rendering="crispEdges"/><text transform="translate(225,649) scale(0.9631,1)" font-size="10" fill="#fff" text-anchor="start" xml:space="preserve">2 May 2022</text><line x1="289.5" y1="636" x2="289.5" y2="640" stroke="#fff" shape-rendering="crispEdges"/><text transform="translate(289,649) scale(0.9631,1)" font-size="10" fill="#fff" text-anchor="start" xml:space="preserve">2 May 19:00</text><line x1="353.5" y1="636" x2="353.5" y2="640" stroke="#fff" shape-rendering="crispEdges"/><text transform="translate(353,649) scale(0.9631,1)" font-size="10" fill="#fff" text-anchor="start" xml:space="preserve">3 May 03:00</text><line x1="417.5" y1="636" x2="417.5" y2="640" stroke="#fff" shape-rendering="crispEdges"/><text transform="translate(417,649) scale(0.9631,1)" font-size="10" fill="#fff" text-anchor="start" xml:space="preserve">3 May 11:00</text><line x1="481.5" y1="636" x2="481.5" y2="640" stroke="#fff" shape-rendering="crispEdges"/><text transform="translate(481,649) scale(0.9631,1)" font-size="10" fill="#fff" text-anchor="start" xml:space="preserve">3 May 19:00</text><line x1="1185.5" y1="636" x2="1185.5" y2="640" stroke="#fff" shape-rendering="crispEdges"/><text transform="translate(1185,649) scale(0.9631,1)" font-size="10" fill="#fff" text-anchor="start" xml:space="preserve">9 May 11:00</text><line x1="1249.5" y1="636" x2="1249.5" y2="640" stroke="#fff" shape-rendering="crispEdges"/><text transform="translate(1249,649) scale(0.9631,1)" font-size="10" fill="#fff" text-anchor="start" xml:space="preserve">9 May 19:00</text><line x1="1313.5" y1="636" x2="1313.5" y2="640" stroke="#fff" shape-rendering="crispEdges"/><text transform="translate(1313,649) scale(0.9631,1)" font-size="10" fill="#fff" text-anchor="start" xml:space="preserve">10 May 03:00</text><text transform="translate(229,155) scale(0.9493,1)" font-size="10" fill="#fff" text-anchor="start" xml:space="preserve">USDJPY,H1</text><text transform="translate(286.4,155) scale(0.8854,1)" font-size="10" fill="#fff" text-anchor="start" xml:space="preserve">130.447</text><text transform="translate(322,155) scale(0.8854,1)" font-size="10" fill="#fff" text-anchor="start" xml:space="preserve">130.454</text><text transform="translate(358.5,155) scale(0.8854,1)" font-size="10" fill="#fff" text-anchor="start" xml:space="preserve">130.288</text><text transform="translate(394.6,155) scale(0.8854,1)" font-size="10" fill="#fff" text-anchor="start" xml:space="preserve">130.317</text></g></svg>
<svg style="left:222px;top:698px" width="1214" height="459" viewBox="222 698 1214 459"><g font-family="Liberation Sans"><g stroke="#778899" stroke-dasharray="3,3" shape-rendering="crispEdges"><line x1="257.5" y1="703" x2="257.5" y2="1030"/><line x1="289.5" y1="703" x2="289.5" y2="1030"/><line x1="321.5" y1="703" x2="321.5" y2="1030"/><line x1="353.5" y1="703" x2="353.5" y2="1030"/><line x1="385.5" y1="703" x2="385.5" y2="1030"/><line x1="417.5" y1="703" x2="417.5" y2="1030"/><line x1="449.5" y1="703" x2="449.5" y2="1030"/><line x1="481.5" y1="703" x2="481.5" y2="1030"/><line x1="513.5" y1="703" x2="513.5" y2="1030"/><line x1="545.5" y1="703" x2="545.5" y2="1030"/><line x1="577.5" y1="703" x2="577.5" y2="1030"/><line x1="609.5" y1="703" x2="609.5" y2="1030"/><line x1="641.5" y1="703" x2="641.5" y2="1030"/><line x1="673.5" y1="703" x2="673.5" y2="1030"/><line x1="705.5" y1="703" x2="705.5" y2="1030"/><line x1="737.5" y1="703" x2="737.5" y2="1030"/><line x1="769.5" y1="703" x2="769.5" y2="1030"/><line x1="801.5" y1="703" x2="801.5" y2="1030"/><line x1="833.5" y1="703" x2="833.5" y2="1030"/><line x1="865.5" y1="703" x2="865.5" y2="1030"/><line x1="897.5" y1="703" x2="897.5" y2="1030"/><line x1="929.5" y1="703" x2="929.5" y2="1030"/><line x1="961.5" y1="703" x2="961.5" y2="1030"/><line x1="993.5" y1="703" x2="993.5" y2="1030"/><line x1="1025.5" y1="703" x2="1025.5" y2="1030"/><line x1="1057.5" y1="703" x2="1057.5" y2="1030"/><line x1="1089.5" y1="703" x2="1089.5" y2="1030"/><line x1="1121.5" y1="703" x2="1121.5" y2="1030"/><line x1="1153.5" y1="703" x2="1153.5" y2="1030"/><line x1="1185.5" y1="703" x2="1185.5" y2="1030"/><line x1="1217.5" y1="703" x2="1217.5" y2="1030"/><line x1="1249.5" y1="703" x2="1249.5" y2="1030"/><line x1="1281.5" y1="703" x2="1281.5" y2="1030"/><line x1="1313.5" y1="703" x2="1313.5" y2="1030"/><line x1="1345.5" y1="703" x2="1345.5" y2="1030"/><line x1="1377.5" y1="703" x2="1377.5" y2="1030"/><line x1="226" y1="728.5" x2="1390" y2="728.5"/><line x1="226" y1="761.5" x2="1390" y2="761.5"/><line x1="226" y1="794.5" x2="1390" y2="794.5"/><line x1="226" y1="827.5" x2="1390" y2="827.5"/><line x1="226" y1="860.5" x2="1390" y2="860.5"/><line x1="226" y1="893.5" x2="1390" y2="893.5"/><line x1="226" y1="926.5" x2="1390" y2="926.5"/><line x1="226" y1="959.5" x2="1390" y2="959.5"/><line x1="226" y1="992.5" x2="1390" y2="992.5"/><line x1="226" y1="1025.5" x2="1390" y2="1025.5"/></g><g stroke="#778899" stroke-dasharray="3,3" shape-rendering="crispEdges"><line x1="257.5" y1="1033" x2="257.5" y2="1157"/><line x1="289.5" y1="1033" x2="289.5" y2="1157"/><line x1="321.5" y1="1033" x2="321.5" y2="1157"/><line x1="353.5" y1="1033" x2="353.5" y2="1157"/><line x1="385.5" y1="1033" x2="385.5" y2="1157"/><line x1="417.5" y1="1033" x2="417.5" y2="1157"/><line x1="449.5" y1="1033" x2="449.5" y2="1157"/><line x1="481.5" y1="1033" x2="481.5" y2="1157"/><line x1="513.5" y1="1033" x2="513.5" y2="1157"/><line x1="545.5" y1="1033" x2="545.5" y2="1157"/><line x1="577.5" y1="1033" x2="577.5" y2="1157"/><line x1="609.5" y1="1033" x2="609.5" y2="1157"/><line x1="641.5" y1="1033" x2="641.5" y2="1157"/><line x1="673.5" y1="1033" x2="673.5" y2="1157"/><line x1="705.5" y1="1033" x2="705.5" y2="1157"/><line x1="737.5" y1="1033" x2="737.5" y2="1157"/><line x1="769.5" y1="1033" x2="769.5" y2="1157"/><line x1="801.5" y1="1033" x2="801.5" y2="1157"/><line x1="833.5" y1="1033" x2="833.5" y2="1157"/><line x1="865.5" y1="1033" x2="865.5" y2="1157"/><line x1="897.5" y1="1033" x2="897.5" y2="1157"/><line x1="929.5" y1="1033" x2="929.5" y2="1157"/><line x1="961.5" y1="1033" x2="961.5" y2="1157"/><line x1="993.5" y1="1033" x2="993.5" y2="1157"/><line x1="1025.5" y1="1033" x2="1025.5" y2="1157"/><line x1="1057.5" y1="1033" x2="1057.5" y2="1157"/><line x1="1089.5" y1="1033" x2="1089.5" y2="1157"/><line x1="1121.5" y1="1033" x2="1121.5" y2="1157"/><line x1="1153.5" y1="1033" x2="1153.5" y2="1157"/><line x1="1185.5" y1="1033" x2="1185.5" y2="1157"/><line x1="1217.5" y1="1033" x2="1217.5" y2="1157"/><line x1="1249.5" y1="1033" x2="1249.5" y2="1157"/><line x1="1281.5" y1="1033" x2="1281.5" y2="1157"/><line x1="1313.5" y1="1033" x2="1313.5" y2="1157"/><line x1="1345.5" y1="1033" x2="1345.5" y2="1157"/><line x1="1377.5" y1="1033" x2="1377.5" y2="1157"/></g><line x1="225" y1="737.5" x2="1390" y2="737.5" stroke="#9aa6b4" shape-rendering="crispEdges"/><g stroke="#00ff00" shape-rendering="crispEdges"><line x1="226.5" y1="998" x2="226.5" y2="1006"/><line x1="233.5" y1="997" x2="233.5" y2="1005"/><line x1="241.5" y1="994" x2="241.5" y2="1012"/><line x1="249.5" y1="998" x2="249.5" y2="1008"/><line x1="258.5" y1="1001" x2="258.5" y2="1006"/><line x1="265.5" y1="1000" x2="265.5" y2="1006"/><line x1="273.5" y1="993" x2="273.5" y2="1002"/><line x1="281.5" y1="994" x2="281.5" y2="1005"/><line x1="289.5" y1="994" x2="289.5" y2="1003"/><line x1="297.5" y1="992" x2="297.5" y2="1002"/><line x1="305.5" y1="990" x2="305.5" y2="997"/><line x1="313.5" y1="990" x2="313.5" y2="997"/><line x1="321.5" y1="985" x2="321.5" y2="994"/><line x1="330.5" y1="981" x2="330.5" y2="1002"/><line x1="337.5" y1="995" x2="337.5" y2="1000"/><line x1="345.5" y1="992" x2="345.5" y2="1006"/><line x1="353.5" y1="985" x2="353.5" y2="996"/><line x1="361.5" y1="982" x2="361.5" y2="996"/><line x1="369.5" y1="993" x2="369.5" y2="1002"/><line x1="377.5" y1="994" x2="377.5" y2="1012"/><line x1="385.5" y1="1006" x2="385.5" y2="1012"/><line x1="393.5" y1="1004" x2="393.5" y2="1011"/><line x1="401.5" y1="1005" x2="401.5" y2="1012"/><line x1="409.5" y1="994" x2="409.5" y2="1012"/><line x1="417.5" y1="1000" x2="417.5" y2="1019"/><line x1="425.5" y1="1005" x2="425.5" y2="1021"/><line x1="433.5" y1="1001" x2="433.5" y2="1010"/><line x1="441.5" y1="997" x2="441.5" y2="1006"/><line x1="449.5" y1="998" x2="449.5" y2="1003"/><line x1="457.5" y1="995" x2="457.5" y2="1009"/><line x1="465.5" y1="989" x2="465.5" y2="1008"/><line x1="473.5" y1="989" x2="473.5" y2="1004"/><line x1="482.5" y1="992" x2="482.5" y2="999"/><line x1="489.5" y1="990" x2="489.5" y2="999"/><line x1="497.5" y1="990" x2="497.5" y2="1004"/><line x1="505.5" y1="990" x2="505.5" y2="1004"/><line x1="513.5" y1="979" x2="513.5" y2="996"/><line x1="521.5" y1="955" x2="521.5" y2="982"/><line x1="529.5" y1="955" x2="529.5" y2="961"/><line x1="538.5" y1="956" x2="538.5" y2="963"/><line x1="545.5" y1="950" x2="545.5" y2="959"/><line x1="554.5" y1="953" x2="554.5" y2="965"/><line x1="561.5" y1="958" x2="561.5" y2="963"/><line x1="569.5" y1="956" x2="569.5" y2="962"/><line x1="577.5" y1="954" x2="577.5" y2="960"/><line x1="585.5" y1="953" x2="585.5" y2="962"/><line x1="593.5" y1="949" x2="593.5" y2="960"/><line x1="601.5" y1="948" x2="601.5" y2="956"/><line x1="610.5" y1="948" x2="610.5" y2="961"/><line x1="617.5" y1="946" x2="617.5" y2="959"/><line x1="625.5" y1="947" x2="625.5" y2="952"/><line x1="633.5" y1="942" x2="633.5" y2="955"/><line x1="641.5" y1="940" x2="641.5" y2="946"/><line x1="649.5" y1="940" x2="649.5" y2="952"/><line x1="657.5" y1="929" x2="657.5" y2="955"/><line x1="665.5" y1="926" x2="665.5" y2="950"/><line x1="673.5" y1="915" x2="673.5" y2="932"/><line x1="681.5" y1="912" x2="681.5" y2="920"/><line x1="689.5" y1="909" x2="689.5" y2="923"/><line x1="697.5" y1="919" x2="697.5" y2="934"/><line x1="705.5" y1="930" x2="705.5" y2="945"/><line x1="713.5" y1="930" x2="713.5" y2="943"/><line x1="721.5" y1="930" x2="721.5" y2="937"/><line x1="729.5" y1="926" x2="729.5" y2="934"/><line x1="737.5" y1="919" x2="737.5" y2="928"/><line x1="745.5" y1="921" x2="745.5" y2="944"/><line x1="753.5" y1="926" x2="753.5" y2="938"/><line x1="762.5" y1="901" x2="762.5" y2="931"/><line x1="769.5" y1="907" x2="769.5" y2="916"/><line x1="777.5" y1="904" x2="777.5" y2="914"/><line x1="785.5" y1="905" x2="785.5" y2="912"/><line x1="793.5" y1="900" x2="793.5" y2="912"/><line x1="801.5" y1="898" x2="801.5" y2="909"/><line x1="810.5" y1="884" x2="810.5" y2="907"/><line x1="817.5" y1="889" x2="817.5" y2="899"/><line x1="825.5" y1="892" x2="825.5" y2="902"/><line x1="833.5" y1="888" x2="833.5" y2="897"/><line x1="842.5" y1="882" x2="842.5" y2="898"/><line x1="849.5" y1="884" x2="849.5" y2="905"/><line x1="857.5" y1="885" x2="857.5" y2="903"/><line x1="866.5" y1="882" x2="866.5" y2="889"/><line x1="873.5" y1="884" x2="873.5" y2="895"/><line x1="882.5" y1="885" x2="882.5" y2="895"/><line x1="889.5" y1="879" x2="889.5" y2="889"/><line x1="898.5" y1="881" x2="898.5" y2="895"/><line x1="905.5" y1="875" x2="905.5" y2="898"/><line x1="913.5" y1="869" x2="913.5" y2="878"/><line x1="921.5" y1="867" x2="921.5" y2="873"/><line x1="929.5" y1="864" x2="929.5" y2="874"/><line x1="937.5" y1="855" x2="937.5" y2="870"/><line x1="945.5" y1="839" x2="945.5" y2="866"/><line x1="953.5" y1="836" x2="953.5" y2="847"/><line x1="961.5" y1="841" x2="961.5" y2="849"/><line x1="970.5" y1="838" x2="970.5" y2="851"/><line x1="977.5" y1="828" x2="977.5" y2="841"/><line x1="986.5" y1="827" x2="986.5" y2="846"/><line x1="993.5" y1="810" x2="993.5" y2="837"/><line x1="1001.5" y1="810" x2="1001.5" y2="835"/><line x1="1009.5" y1="826" x2="1009.5" y2="835"/><line x1="1018.5" y1="826" x2="1018.5" y2="832"/><line x1="1025.5" y1="828" x2="1025.5" y2="838"/><line x1="1033.5" y1="830" x2="1033.5" y2="846"/><line x1="1041.5" y1="820" x2="1041.5" y2="843"/><line x1="1049.5" y1="820" x2="1049.5" y2="850"/><line x1="1057.5" y1="821" x2="1057.5" y2="838"/><line x1="1065.5" y1="816" x2="1065.5" y2="835"/><line x1="1073.5" y1="815" x2="1073.5" y2="821"/><line x1="1081.5" y1="814" x2="1081.5" y2="830"/><line x1="1090.5" y1="808" x2="1090.5" y2="830"/><line x1="1097.5" y1="799" x2="1097.5" y2="815"/><line x1="1106.5" y1="797" x2="1106.5" y2="805"/><line x1="1113.5" y1="799" x2="1113.5" y2="808"/><line x1="1122.5" y1="796" x2="1122.5" y2="807"/><line x1="1129.5" y1="796" x2="1129.5" y2="805"/><line x1="1137.5" y1="795" x2="1137.5" y2="827"/><line x1="1146.5" y1="792" x2="1146.5" y2="825"/><line x1="1153.5" y1="795" x2="1153.5" y2="803"/><line x1="1162.5" y1="795" x2="1162.5" y2="806"/><line x1="1169.5" y1="792" x2="1169.5" y2="798"/><line x1="1177.5" y1="788" x2="1177.5" y2="800"/><line x1="1185.5" y1="784" x2="1185.5" y2="796"/><line x1="1193.5" y1="775" x2="1193.5" y2="793"/><line x1="1201.5" y1="769" x2="1201.5" y2="827"/><line x1="1209.5" y1="815" x2="1209.5" y2="829"/><line x1="1217.5" y1="820" x2="1217.5" y2="832"/><line x1="1225.5" y1="793" x2="1225.5" y2="825"/><line x1="1233.5" y1="779" x2="1233.5" y2="814"/><line x1="1241.5" y1="753" x2="1241.5" y2="786"/><line x1="1250.5" y1="752" x2="1250.5" y2="773"/><line x1="1257.5" y1="765" x2="1257.5" y2="774"/><line x1="1265.5" y1="755" x2="1265.5" y2="768"/><line x1="1273.5" y1="756" x2="1273.5" y2="778"/><line x1="1281.5" y1="757" x2="1281.5" y2="781"/><line x1="1290.5" y1="754" x2="1290.5" y2="780"/><line x1="1297.5" y1="752" x2="1297.5" y2="766"/><line x1="1306.5" y1="744" x2="1306.5" y2="763"/><line x1="1313.5" y1="737" x2="1313.5" y2="749"/><line x1="1322.5" y1="728" x2="1322.5" y2="741"/><line x1="1329.5" y1="730" x2="1329.5" y2="752"/><line x1="1337.5" y1="719" x2="1337.5" y2="750"/><line x1="1345.5" y1="730" x2="1345.5" y2="740"/><line x1="1353.5" y1="731" x2="1353.5" y2="739"/><line x1="1361.5" y1="735" x2="1361.5" y2="743"/><line x1="1369.5" y1="733" x2="1369.5" y2="744"/><rect x="224.5" y="1000.5" width="4" height="4" fill="#000"/><rect x="231.5" y="1001.5" width="4" height="1" fill="#000"/><rect x="239.5" y="999.5" width="4" height="4" fill="#000"/><rect x="247.5" y="1002.5" width="4" height="2" fill="#fff"/><rect x="256.5" y="1001.5" width="4" height="3" fill="#000"/><rect x="263.5" y="1000.5" width="4" height="2" fill="#000"/><rect x="271.5" y="998.5" width="4" height="3" fill="#000"/><rect x="279.5" y="995.5" width="4" height="4" fill="#000"/><rect x="287.5" y="995.5" width="4" height="1" fill="#000"/><rect x="295.5" y="994.5" width="4" height="7" fill="#000"/><rect x="303.5" y="991.5" width="4" height="4" fill="#000"/><rect x="311.5" y="990.5" width="4" height="2" fill="#000"/><rect x="319.5" y="986.5" width="4" height="6" fill="#000"/><rect x="328.5" y="986.5" width="4" height="12" fill="#fff"/><rect x="335.5" y="996.5" width="4" height="3" fill="#000"/><rect x="343.5" y="992.5" width="4" height="14" fill="#000"/><rect x="351.5" y="989.5" width="4" height="3" fill="#000"/><rect x="359.5" y="989.5" width="4" height="6" fill="#fff"/><rect x="367.5" y="995.5" width="4" height="6" fill="#fff"/><rect x="375.5" y="1000.5" width="4" height="9" fill="#fff"/><rect x="383.5" y="1009.5" width="4" height="1" fill="#000"/><rect x="391.5" y="1006.5" width="4" height="5" fill="#000"/><rect x="399.5" y="1007.5" width="4" height="3" fill="#fff"/><rect x="407.5" y="1000.5" width="4" height="9" fill="#000"/><rect x="415.5" y="1000.5" width="4" height="19" fill="#fff"/><rect x="423.5" y="1008.5" width="4" height="10" fill="#000"/><rect x="431.5" y="1002.5" width="4" height="7" fill="#000"/><rect x="439.5" y="998.5" width="4" height="5" fill="#000"/><rect x="447.5" y="999.5" width="4" height="2" fill="#fff"/><rect x="455.5" y="1001.5" width="4" height="5" fill="#fff"/><rect x="463.5" y="989.5" width="4" height="18" fill="#000"/><rect x="471.5" y="989.5" width="4" height="7" fill="#fff"/><rect x="480.5" y="993.5" width="4" height="4" fill="#000"/><rect x="487.5" y="992.5" width="4" height="4" fill="#000"/><rect x="495.5" y="992.5" width="4" height="10" fill="#fff"/><rect x="503.5" y="991.5" width="4" height="12" fill="#000"/><rect x="511.5" y="982.5" width="4" height="9" fill="#000"/><rect x="519.5" y="956.5" width="4" height="26" fill="#000"/><rect x="527.5" y="957.5" width="4" height="2" fill="#fff"/><rect x="536.5" y="958.5" width="4" height="2" fill="#000"/><rect x="543.5" y="955.5" width="4" height="3" fill="#000"/><rect x="552.5" y="956.5" width="4" height="4" fill="#fff"/><rect x="559.5" y="960.5" width="4" height="2" fill="#000"/><rect x="567.5" y="956.5" width="4" height="5" fill="#000"/><rect x="575.5" y="956.5" width="4" height="1" fill="#000"/><rect x="583.5" y="956.5" width="4" height="4" fill="#000"/><rect x="591.5" y="950.5" width="4" height="6" fill="#000"/><rect x="599.5" y="949.5" width="4" height="1" fill="#000"/><rect x="608.5" y="950.5" width="4" height="4" fill="#fff"/><rect x="615.5" y="950.5" width="4" height="4" fill="#000"/><rect x="623.5" y="949.5" width="4" height="1" fill="#000"/><rect x="631.5" y="945.5" width="4" height="10" fill="#000"/><rect x="639.5" y="943.5" width="4" height="2" fill="#000"/><rect x="647.5" y="942.5" width="4" height="1" fill="#000"/><rect x="655.5" y="943.5" width="4" height="6" fill="#fff"/><rect x="663.5" y="928.5" width="4" height="22" fill="#000"/><rect x="671.5" y="920.5" width="4" height="8" fill="#000"/><rect x="679.5" y="914.5" width="4" height="6" fill="#000"/><rect x="687.5" y="914.5" width="4" height="7" fill="#fff"/><rect x="695.5" y="922.5" width="4" height="12" fill="#fff"/><rect x="703.5" y="933.5" width="4" height="1" fill="#000"/><rect x="711.5" y="930.5" width="4" height="4" fill="#000"/><rect x="719.5" y="930.5" width="4" height="4" fill="#fff"/><rect x="727.5" y="926.5" width="4" height="8" fill="#000"/><rect x="735.5" y="922.5" width="4" height="5" fill="#000"/><rect x="743.5" y="922.5" width="4" height="10" fill="#fff"/><rect x="751.5" y="930.5" width="4" height="2" fill="#000"/><rect x="760.5" y="908.5" width="4" height="23" fill="#000"/><rect x="767.5" y="908.5" width="4" height="4" fill="#fff"/><rect x="775.5" y="905.5" width="4" height="7" fill="#000"/><rect x="783.5" y="906.5" width="4" height="4" fill="#fff"/><rect x="791.5" y="900.5" width="4" height="11" fill="#000"/><rect x="799.5" y="900.5" width="4" height="1" fill="#000"/><rect x="808.5" y="890.5" width="4" height="12" fill="#000"/><rect x="815.5" y="890.5" width="4" height="4" fill="#fff"/><rect x="823.5" y="896.5" width="4" height="2" fill="#000"/><rect x="831.5" y="890.5" width="4" height="7" fill="#000"/><rect x="840.5" y="887.5" width="4" height="3" fill="#000"/><rect x="847.5" y="887.5" width="4" height="17" fill="#fff"/><rect x="855.5" y="886.5" width="4" height="16" fill="#000"/><rect x="864.5" y="886.5" width="4" height="1" fill="#000"/><rect x="871.5" y="891.5" width="4" height="2" fill="#fff"/><rect x="880.5" y="887.5" width="4" height="6" fill="#000"/><rect x="887.5" y="882.5" width="4" height="6" fill="#000"/><rect x="896.5" y="882.5" width="4" height="12" fill="#fff"/><rect x="903.5" y="876.5" width="4" height="18" fill="#000"/><rect x="911.5" y="870.5" width="4" height="6" fill="#000"/><rect x="919.5" y="869.5" width="4" height="1" fill="#000"/><rect x="927.5" y="868.5" width="4" height="2" fill="#000"/><rect x="935.5" y="857.5" width="4" height="13" fill="#000"/><rect x="943.5" y="841.5" width="4" height="16" fill="#000"/><rect x="951.5" y="842.5" width="4" height="4" fill="#fff"/><rect x="959.5" y="841.5" width="4" height="5" fill="#000"/><rect x="968.5" y="839.5" width="4" height="3" fill="#000"/><rect x="975.5" y="834.5" width="4" height="6" fill="#000"/><rect x="984.5" y="830.5" width="4" height="4" fill="#000"/><rect x="991.5" y="811.5" width="4" height="19" fill="#000"/><rect x="999.5" y="811.5" width="4" height="24" fill="#fff"/><rect x="1007.5" y="828.5" width="4" height="7" fill="#000"/><rect x="1016.5" y="831.5" width="4" height="1" fill="#000"/><rect x="1023.5" y="832.5" width="4" height="1" fill="#000"/><rect x="1031.5" y="832.5" width="4" height="11" fill="#fff"/><rect x="1039.5" y="827.5" width="4" height="16" fill="#000"/><rect x="1047.5" y="826.5" width="4" height="1" fill="#000"/><rect x="1055.5" y="822.5" width="4" height="4" fill="#000"/><rect x="1063.5" y="816.5" width="4" height="19" fill="#000"/><rect x="1071.5" y="816.5" width="4" height="1" fill="#000"/><rect x="1079.5" y="815.5" width="4" height="15" fill="#fff"/><rect x="1088.5" y="810.5" width="4" height="20" fill="#000"/><rect x="1095.5" y="801.5" width="4" height="9" fill="#000"/><rect x="1104.5" y="802.5" width="4" height="1" fill="#000"/><rect x="1111.5" y="802.5" width="4" height="5" fill="#fff"/><rect x="1120.5" y="796.5" width="4" height="11" fill="#000"/><rect x="1127.5" y="796.5" width="4" height="2" fill="#000"/><rect x="1135.5" y="798.5" width="4" height="23" fill="#fff"/><rect x="1144.5" y="796.5" width="4" height="25" fill="#000"/><rect x="1151.5" y="796.5" width="4" height="2" fill="#000"/><rect x="1160.5" y="796.5" width="4" height="8" fill="#000"/><rect x="1167.5" y="793.5" width="4" height="5" fill="#000"/><rect x="1175.5" y="789.5" width="4" height="4" fill="#000"/><rect x="1183.5" y="790.5" width="4" height="3" fill="#fff"/><rect x="1191.5" y="777.5" width="4" height="16" fill="#000"/><rect x="1199.5" y="778.5" width="4" height="49" fill="#fff"/><rect x="1207.5" y="822.5" width="4" height="5" fill="#000"/><rect x="1215.5" y="822.5" width="4" height="1" fill="#000"/><rect x="1223.5" y="800.5" width="4" height="24" fill="#000"/><rect x="1231.5" y="780.5" width="4" height="20" fill="#000"/><rect x="1239.5" y="758.5" width="4" height="22" fill="#000"/><rect x="1248.5" y="758.5" width="4" height="14" fill="#fff"/><rect x="1255.5" y="767.5" width="4" height="6" fill="#000"/><rect x="1263.5" y="764.5" width="4" height="3" fill="#000"/><rect x="1271.5" y="764.5" width="4" height="8" fill="#fff"/><rect x="1279.5" y="762.5" width="4" height="10" fill="#000"/><rect x="1288.5" y="762.5" width="4" height="1" fill="#000"/><rect x="1295.5" y="755.5" width="4" height="9" fill="#000"/><rect x="1304.5" y="745.5" width="4" height="17" fill="#000"/><rect x="1311.5" y="738.5" width="4" height="7" fill="#000"/><rect x="1320.5" y="732.5" width="4" height="6" fill="#000"/><rect x="1327.5" y="732.5" width="4" height="15" fill="#fff"/><rect x="1335.5" y="738.5" width="4" height="10" fill="#000"/><rect x="1343.5" y="731.5" width="4" height="7" fill="#000"/><rect x="1351.5" y="731.5" width="4" height="5" fill="#fff"/><rect x="1359.5" y="736.5" width="4" height="5" fill="#fff"/><rect x="1367.5" y="737.5" width="4" height="3" fill="#000"/></g><g stroke="#c8c8c8" shape-rendering="crispEdges"><line x1="226.5" y1="1151" x2="226.5" y2="1157"/><line x1="234.5" y1="1145" x2="234.5" y2="1157"/><line x1="242.5" y1="1140" x2="242.5" y2="1157"/><line x1="250.5" y1="1140" x2="250.5" y2="1157"/><line x1="258.5" y1="1138" x2="258.5" y2="1157"/><line x1="266.5" y1="1137" x2="266.5" y2="1157"/><line x1="274.5" y1="1136" x2="274.5" y2="1157"/><line x1="282.5" y1="1133" x2="282.5" y2="1157"/><line x1="290.5" y1="1132" x2="290.5" y2="1157"/><line x1="298.5" y1="1131" x2="298.5" y2="1157"/><line x1="306.5" y1="1130" x2="306.5" y2="1157"/><line x1="314.5" y1="1128" x2="314.5" y2="1157"/><line x1="321.5" y1="1128" x2="321.5" y2="1157"/><line x1="329.5" y1="1131" x2="329.5" y2="1157"/><line x1="337.5" y1="1134" x2="337.5" y2="1157"/><line x1="345.5" y1="1135" x2="345.5" y2="1157"/><line x1="353.5" y1="1133" x2="353.5" y2="1157"/><line x1="361.5" y1="1139" x2="361.5" y2="1157"/><line x1="369.5" y1="1145" x2="369.5" y2="1157"/><line x1="521.5" y1="1142" x2="521.5" y2="1157"/><line x1="529.5" y1="1128" x2="529.5" y2="1157"/><line x1="537.5" y1="1120" x2="537.5" y2="1157"/><line x1="545.5" y1="1111" x2="545.5" y2="1157"/><line x1="553.5" y1="1108" x2="553.5" y2="1157"/><line x1="561.5" y1="1108" x2="561.5" y2="1157"/><line x1="569.5" y1="1105" x2="569.5" y2="1157"/><line x1="577.5" y1="1104" x2="577.5" y2="1157"/><line x1="585.5" y1="1105" x2="585.5" y2="1157"/><line x1="593.5" y1="1102" x2="593.5" y2="1157"/><line x1="601.5" y1="1101" x2="601.5" y2="1157"/><line x1="609.5" y1="1103" x2="609.5" y2="1157"/><line x1="617.5" y1="1104" x2="617.5" y2="1157"/><line x1="625.5" y1="1106" x2="625.5" y2="1157"/><line x1="633.5" y1="1104" x2="633.5" y2="1157"/><line x1="641.5" y1="1104" x2="641.5" y2="1157"/><line x1="649.5" y1="1104" x2="649.5" y2="1157"/><line x1="657.5" y1="1110" x2="657.5" y2="1157"/><line x1="665.5" y1="1104" x2="665.5" y2="1157"/><line x1="673.5" y1="1093" x2="673.5" y2="1157"/><line x1="681.5" y1="1086" x2="681.5" y2="1157"/><line x1="689.5" y1="1084" x2="689.5" y2="1157"/><line x1="697.5" y1="1090" x2="697.5" y2="1157"/><line x1="705.5" y1="1098" x2="705.5" y2="1157"/><line x1="713.5" y1="1100" x2="713.5" y2="1157"/><line x1="721.5" y1="1105" x2="721.5" y2="1157"/><line x1="729.5" y1="1108" x2="729.5" y2="1157"/><line x1="737.5" y1="1108" x2="737.5" y2="1157"/><line x1="745.5" y1="1114" x2="745.5" y2="1157"/><line x1="753.5" y1="1118" x2="753.5" y2="1157"/><line x1="761.5" y1="1111" x2="761.5" y2="1157"/><line x1="769.5" y1="1104" x2="769.5" y2="1157"/><line x1="777.5" y1="1103" x2="777.5" y2="1157"/><line x1="785.5" y1="1103" x2="785.5" y2="1157"/><line x1="793.5" y1="1100" x2="793.5" y2="1157"/><line x1="801.5" y1="1096" x2="801.5" y2="1157"/><line x1="809.5" y1="1090" x2="809.5" y2="1157"/><line x1="817.5" y1="1090" x2="817.5" y2="1157"/><line x1="825.5" y1="1089" x2="825.5" y2="1157"/><line x1="833.5" y1="1087" x2="833.5" y2="1157"/><line x1="841.5" y1="1086" x2="841.5" y2="1157"/><line x1="849.5" y1="1094" x2="849.5" y2="1157"/><line x1="857.5" y1="1093" x2="857.5" y2="1157"/><line x1="865.5" y1="1087" x2="865.5" y2="1157"/><line x1="874.5" y1="1096" x2="874.5" y2="1157"/><line x1="882.5" y1="1098" x2="882.5" y2="1157"/><line x1="890.5" y1="1100" x2="890.5" y2="1157"/><line x1="898.5" y1="1104" x2="898.5" y2="1157"/><line x1="906.5" y1="1103" x2="906.5" y2="1157"/><line x1="914.5" y1="1098" x2="914.5" y2="1157"/><line x1="922.5" y1="1095" x2="922.5" y2="1157"/><line x1="930.5" y1="1098" x2="930.5" y2="1157"/><line x1="938.5" y1="1087" x2="938.5" y2="1157"/><line x1="946.5" y1="1075" x2="946.5" y2="1157"/><line x1="954.5" y1="1069" x2="954.5" y2="1157"/><line x1="962.5" y1="1062" x2="962.5" y2="1157"/><line x1="970.5" y1="1060" x2="970.5" y2="1157"/><line x1="978.5" y1="1055" x2="978.5" y2="1157"/><line x1="986.5" y1="1050" x2="986.5" y2="1157"/><line x1="993.5" y1="1039" x2="993.5" y2="1157"/><line x1="1001.5" y1="1044" x2="1001.5" y2="1157"/><line x1="1009.5" y1="1048" x2="1009.5" y2="1157"/><line x1="1017.5" y1="1052" x2="1017.5" y2="1157"/><line x1="1026.5" y1="1057" x2="1026.5" y2="1157"/><line x1="1034.5" y1="1070" x2="1034.5" y2="1157"/><line x1="1042.5" y1="1072" x2="1042.5" y2="1157"/><line x1="1050.5" y1="1074" x2="1050.5" y2="1157"/><line x1="1058.5" y1="1074" x2="1058.5" y2="1157"/><line x1="1066.5" y1="1074" x2="1066.5" y2="1157"/><line x1="1074.5" y1="1074" x2="1074.5" y2="1157"/><line x1="1082.5" y1="1084" x2="1082.5" y2="1157"/><line x1="1090.5" y1="1080" x2="1090.5" y2="1157"/><line x1="1098.5" y1="1075" x2="1098.5" y2="1157"/><line x1="1106.5" y1="1075" x2="1106.5" y2="1157"/><line x1="1114.5" y1="1076" x2="1114.5" y2="1157"/><line x1="1122.5" y1="1076" x2="1122.5" y2="1157"/><line x1="1130.5" y1="1074" x2="1130.5" y2="1157"/><line x1="1138.5" y1="1086" x2="1138.5" y2="1157"/><line x1="1146.5" y1="1086" x2="1146.5" y2="1157"/><line x1="1154.5" y1="1086" x2="1154.5" y2="1157"/><line x1="1162.5" y1="1087" x2="1162.5" y2="1157"/><line x1="1170.5" y1="1087" x2="1170.5" y2="1157"/><line x1="1178.5" y1="1087" x2="1178.5" y2="1157"/><line x1="1186.5" y1="1084" x2="1186.5" y2="1157"/><line x1="1194.5" y1="1087" x2="1194.5" y2="1157"/><line x1="1202.5" y1="1107" x2="1202.5" y2="1157"/><line x1="1210.5" y1="1122" x2="1210.5" y2="1157"/><line x1="1218.5" y1="1134" x2="1218.5" y2="1157"/><line x1="1225.5" y1="1136" x2="1225.5" y2="1157"/><line x1="1233.5" y1="1127" x2="1233.5" y2="1157"/><line x1="1241.5" y1="1108" x2="1241.5" y2="1157"/><line x1="1250.5" y1="1107" x2="1250.5" y2="1157"/><line x1="1258.5" y1="1095" x2="1258.5" y2="1157"/><line x1="1266.5" y1="1089" x2="1266.5" y2="1157"/><line x1="1274.5" y1="1090" x2="1274.5" y2="1157"/><line x1="1282.5" y1="1086" x2="1282.5" y2="1157"/><line x1="1290.5" y1="1084" x2="1290.5" y2="1157"/><line x1="1297.5" y1="1081" x2="1297.5" y2="1157"/><line x1="1305.5" y1="1073" x2="1305.5" y2="1157"/><line x1="1313.5" y1="1067" x2="1313.5" y2="1157"/><line x1="1322.5" y1="1058" x2="1322.5" y2="1157"/><line x1="1330.5" y1="1060" x2="1330.5" y2="1157"/><line x1="1338.5" y1="1061" x2="1338.5" y2="1157"/><line x1="1346.5" y1="1057" x2="1346.5" y2="1157"/><line x1="1354.5" y1="1059" x2="1354.5" y2="1157"/><line x1="1362.5" y1="1064" x2="1362.5" y2="1157"/><line x1="1369.5" y1="1069" x2="1369.5" y2="1157"/></g><polyline points="258,1155 293.5,1139.5 329,1131.5 360,1131.5 382,1137 408.6,1152.8 420,1158 528,1158 532.6,1152.8 559,1126 594.5,1106 625.5,1103 670,1103 692,1100 714,1096 736,1096 762.8,1106 794,1105 825,1096 840,1092.8 865,1090 895,1095.4 924.7,1098 945.9,1093 967,1079 988,1067.4 1009.4,1054 1026,1050.5 1047.5,1054 1077,1067.4 1102.5,1075 1136.4,1076 1170.3,1078.4 1195.7,1084.4 1221,1096 1242.3,1109 1263.5,1112.3 1284.6,1104.7 1305.8,1087.8 1327,1075 1348,1066.6 1367,1062.3" fill="none" stroke="#ff1a1a" stroke-width="1" stroke-dasharray="3,2"/><path d="M224.5 1157V702.5H1390.5V1157" fill="none" stroke="#fff" shape-rendering="crispEdges"/><line x1="225" y1="1030.5" x2="1390" y2="1030.5" stroke="#fff" shape-rendering="crispEdges"/><line x1="225" y1="1032.5" x2="1390" y2="1032.5" stroke="#fff" shape-rendering="crispEdges"/><text transform="translate(1397,732.3) scale(0.8854,1)" font-size="10" fill="#fff" text-anchor="start" xml:space="preserve">0.99440</text><text transform="translate(1397,765.3) scale(0.8854,1)" font-size="10" fill="#fff" text-anchor="start" xml:space="preserve">0.98700</text><text transform="translate(1397,798.3) scale(0.8854,1)" font-size="10" fill="#fff" text-anchor="start" xml:space="preserve">0.97940</text><text transform="translate(1397,831.3) scale(0.8854,1)" font-size="10" fill="#fff" text-anchor="start" xml:space="preserve">0.97200</text><text transform="translate(1397,864.3) scale(0.8854,1)" font-size="10" fill="#fff" text-anchor="start" xml:space="preserve">0.96460</text><text transform="translate(1397,897.3) scale(0.8854,1)" font-size="10" fill="#fff" text-anchor="start" xml:space="preserve">0.95720</text><text transform="translate(1397,930.3) scale(0.8854,1)" font-size="10" fill="#fff" text-anchor="start" xml:space="preserve">0.94960</text><text transform="translate(1397,963.3) scale(0.8854,1)" font-size="10" fill="#fff" text-anchor="start" xml:space="preserve">0.94220</text><text transform="translate(1397,996.3) scale(0.8854,1)" font-size="10" fill="#fff" text-anchor="start" xml:space="preserve">0.93480</text><text transform="translate(1397,1029.3) scale(0.8854,1)" font-size="10" fill="#fff" text-anchor="start" xml:space="preserve">0.92740</text><g shape-rendering="crispEdges"><line x1="1391" y1="728.5" x2="1395" y2="728.5" stroke="#fff"/><line x1="1391" y1="761.5" x2="1395" y2="761.5" stroke="#fff"/><line x1="1391" y1="794.5" x2="1395" y2="794.5" stroke="#fff"/><line x1="1391" y1="827.5" x2="1395" y2="827.5" stroke="#fff"/><line x1="1391" y1="860.5" x2="1395" y2="860.5" stroke="#fff"/><line x1="1391" y1="893.5" x2="1395" y2="893.5" stroke="#fff"/><line x1="1391" y1="926.5" x2="1395" y2="926.5" stroke="#fff"/><line x1="1391" y1="959.5" x2="1395" y2="959.5" stroke="#fff"/><line x1="1391" y1="992.5" x2="1395" y2="992.5" stroke="#fff"/><line x1="1391" y1="1025.5" x2="1395" y2="1025.5" stroke="#fff"/></g><rect x="1392" y="731.5" width="41" height="12" fill="#fff"/><text transform="translate(1396,741.5) scale(0.8854,1)" font-size="10" fill="#000" text-anchor="start" xml:space="preserve">0.99225</text><text transform="translate(1393,1041) scale(0.9351,1)" font-size="10" fill="#fff" text-anchor="start" xml:space="preserve">0.005297</text><text transform="translate(229,714) scale(0.9801,1)" font-size="10" fill="#fff" text-anchor="start" xml:space="preserve">USDCHF,H4</text><text transform="translate(290.8,714) scale(0.8854,1)" font-size="10" fill="#fff" text-anchor="start" xml:space="preserve">0.99159</text><text transform="translate(326.6,714) scale(0.8854,1)" font-size="10" fill="#fff" text-anchor="start" xml:space="preserve">0.99335</text><text transform="translate(362.4,714) scale(0.8854,1)" font-size="10" fill="#fff" text-anchor="start" xml:space="preserve">0.99087</text><text transform="translate(398.2,714) scale(0.8854,1)" font-size="10" fill="#fff" text-anchor="start" xml:space="preserve">0.99225</text><text transform="translate(229,1043) scale(0.9501,1)" font-size="10" fill="#fff" text-anchor="start" xml:space="preserve">MACD(12,26,9)</text><text transform="translate(298,1043) scale(0.8872,1)" font-size="10" fill="#fff" text-anchor="start" xml:space="preserve">0.004063</text><text transform="translate(338,1043) scale(0.9112,1)" font-size="10" fill="#fff" text-anchor="start" xml:space="preserve">0.004229</text></g></svg>
<div style="left:209px;top:1157px;width:1244px;height:21px;background:#f0f0f0"></div>
<div style="left:209px;top:1157px;width:1244px;height:1px;background:#000"></div>
<div style="left:210px;top:1157px;width:1px;height:19px;background:#000"></div>
<div style="left:467px;top:1157px;width:82px;height:20px;background:#fff;border:1px solid #000;border-top:none"></div>
<div style="left:226px;top:1160.0px;line-height:14px;white-space:nowrap;transform-origin:0 0;transform:scaleX(0.8796);font-size:12px;color:#8a8a8a">EURUSD,H4</div>
<div style="left:309px;top:1160.0px;line-height:14px;white-space:nowrap;transform-origin:0 0;transform:scaleX(0.9355);font-size:12px;color:#8a8a8a">USDCHF,H4</div>
<div style="left:394px;top:1160.0px;line-height:14px;white-space:nowrap;transform-origin:0 0;transform:scaleX(0.8940);font-size:12px;color:#8a8a8a">GBPUSD,H4</div>
<div style="left:478px;top:1160.0px;line-height:14px;white-space:nowrap;transform-origin:0 0;transform:scaleX(0.8841);font-size:12px;color:#000">USDJPY,H1</div>
<div style="left:299px;top:1160px;width:1px;height:14px;background:#808080"></div>
<div style="left:383px;top:1160px;width:1px;height:14px;background:#808080"></div>
<svg style="left:1422px;top:1162px;" width="5" height="8" viewBox="0 0 5 8"><path d="M5 0V8L0 4Z" fill="#999"/></svg>
<svg style="left:1441px;top:1162px;" width="5" height="8" viewBox="0 0 5 8"><path d="M0 0V8L5 4Z" fill="#999"/></svg>
<div style="left:0px;top:1178px;width:1457px;height:182px;background:#f0f0f0"></div>
<div style="left:0px;top:1178px;width:1457px;height:1px;background:#d0d0d0"></div>
<div style="left:2px;top:1195px;width:14px;height:163px;background:linear-gradient(90deg,#c4d3e4,#d8e3ef)"></div>
<svg style="left:5px;top:1183px;" width="7" height="7" viewBox="0 0 7 7"><path d="M0.5 0.5L6.5 6.5M6.5 0.5L0.5 6.5" stroke="#000" stroke-width="1.6"/></svg>
<div style="left:2px;top:1300px;width:14px;height:57px;"><div style="position:absolute;left:0;top:0;width:57px;height:14px;transform-origin:0 0;transform:translate(0,57px) rotate(-90deg);font-size:11px;line-height:14px;color:#333;white-space:nowrap"><span class="j">ターミナル</span></div></div>
<div style="left:16px;top:1181px;width:1437px;height:155px;background:#fff;border-left:1px solid #a0a0a0;border-top:1px solid #a0a0a0;border-right:1px solid #a8a8a8"></div>
<div style="left:143px;top:1182px;width:1px;height:24px;background:#e5e5e5"></div>
<div style="left:359px;top:1182px;width:1px;height:24px;background:#e5e5e5"></div>
<div style="left:457px;top:1182px;width:1px;height:24px;background:#e5e5e5"></div>
<div style="left:535px;top:1182px;width:1px;height:24px;background:#e5e5e5"></div>
<div style="left:633px;top:1182px;width:1px;height:24px;background:#e5e5e5"></div>
<div style="left:731px;top:1182px;width:1px;height:24px;background:#e5e5e5"></div>
<div style="left:829px;top:1182px;width:1px;height:24px;background:#e5e5e5"></div>
<div style="left:927px;top:1182px;width:1px;height:24px;background:#e5e5e5"></div>
<div style="left:1143px;top:1182px;width:1px;height:24px;background:#e5e5e5"></div>
<div style="left:1241px;top:1182px;width:1px;height:24px;background:#e5e5e5"></div>
<div style="left:1339px;top:1182px;width:1px;height:24px;background:#e5e5e5"></div>
<div style="left:17px;top:1206px;width:1435px;height:1px;background:#d0d0d0"></div>
<div style="left:23px;top:1187.0px;line-height:14px;white-space:nowrap;transform-origin:0 0;transform:scaleX(1.0417);font-size:12px"><span class="j">注文番号</span></div>
<div style="left:329px;top:1187.0px;line-height:14px;white-space:nowrap;transform-origin:0 0;transform:scaleX(1.0008);font-size:12px"><span class="j">時間</span></div>
<div style="left:400px;top:1187.0px;line-height:14px;white-space:nowrap;transform-origin:0 0;transform:scaleX(1.0621);font-size:12px"><span class="j">取引種別</span></div>
<div style="left:504px;top:1187.0px;line-height:14px;white-space:nowrap;transform-origin:0 0;transform:scaleX(1.0621);font-size:12px"><span class="j">数量</span></div>
<div style="left:581px;top:1187.0px;line-height:14px;white-space:nowrap;transform-origin:0 0;transform:scaleX(0.9681);font-size:12px"><span class="j">通貨ペア</span></div>
<div style="left:700.4px;top:1187.0px;line-height:14px;white-space:nowrap;transform-origin:0 0;transform:scaleX(1.0335);font-size:12px"><span class="j">価格</span></div>
<div style="left:739.6px;top:1187.0px;line-height:14px;white-space:nowrap;transform-origin:0 0;transform:scaleX(1.0096);font-size:12px"><span class="j">決済逆指値</span>(S...</div>
<div style="left:843.8px;top:1187.0px;line-height:14px;white-space:nowrap;transform-origin:0 0;transform:scaleX(1.0262);font-size:12px"><span class="j">決済指値</span>(T/P)</div>
<div style="left:1112.8px;top:1187.0px;line-height:14px;white-space:nowrap;transform-origin:0 0;transform:scaleX(0.9804);font-size:12px"><span class="j">時間</span></div>
<div style="left:1210.5px;top:1187.0px;line-height:14px;white-space:nowrap;transform-origin:0 0;transform:scaleX(1.0621);font-size:12px"><span class="j">価格</span></div>
<div style="left:1295px;top:1187.0px;line-height:14px;white-space:nowrap;transform-origin:0 0;transform:scaleX(0.7884);font-size:12px"><span class="j">スワップ</span></div>
<div style="left:1420px;top:1187.0px;line-height:14px;white-space:nowrap;transform-origin:0 0;transform:scaleX(1.0212);font-size:12px"><span class="j">損益</span></div>
<div style="left:86px;top:1188.0px;line-height:14px;white-space:nowrap;transform-origin:0 0;font-size:9px;color:#777">/</div>
<div style="left:143px;top:1206px;width:1px;height:20px;background:#d8d8d8"></div>
<div style="left:359px;top:1206px;width:1px;height:20px;background:#d8d8d8"></div>
<div style="left:457px;top:1206px;width:1px;height:20px;background:#d8d8d8"></div>
<div style="left:535px;top:1206px;width:1px;height:20px;background:#d8d8d8"></div>
<div style="left:633px;top:1206px;width:1px;height:20px;background:#d8d8d8"></div>
<div style="left:731px;top:1206px;width:1px;height:20px;background:#d8d8d8"></div>
<div style="left:829px;top:1206px;width:1px;height:20px;background:#d8d8d8"></div>
<div style="left:927px;top:1206px;width:1px;height:20px;background:#d8d8d8"></div>
<div style="left:1143px;top:1206px;width:1px;height:20px;background:#d8d8d8"></div>
<div style="left:1241px;top:1206px;width:1px;height:20px;background:#d8d8d8"></div>
<div style="left:1339px;top:1206px;width:1px;height:20px;background:#d8d8d8"></div>
<svg style="left:19px;top:1208px;" width="13" height="15" viewBox="0 0 13 15"><rect x="0.5" y="0.5" width="12" height="14" fill="#fff" stroke="#888"/><path d="M6.5 3L10 7H8V11H5V7H3Z" fill="#22b030"/></svg>
<div style="left:38.5px;top:1209.0px;line-height:14px;white-space:nowrap;transform-origin:0 0;transform:scaleX(0.9075);font-size:12px">243715824</div>
<div style="left:-244.2px;width:600px;text-align:right;top:1209.0px;line-height:14px;white-space:nowrap;transform-origin:100% 0;transform:scaleX(0.8992);font-size:12px">2022.05.10 05:51:57</div>
<div style="left:-146.2px;width:600px;text-align:right;top:1209.0px;line-height:14px;white-space:nowrap;transform-origin:100% 0;transform:scaleX(0.9517);font-size:12px">balance</div>
<div style="left:848.3px;width:600px;text-align:right;top:1209.0px;line-height:14px;white-space:nowrap;transform-origin:100% 0;transform:scaleX(0.9075);font-size:12px">100 000.00</div>
<div style="left:17px;top:1226px;width:1435px;height:20px;background:#0078d7"></div>
<div style="left:143px;top:1226px;width:1px;height:20px;background:#5aa4e6"></div>
<div style="left:359px;top:1226px;width:1px;height:20px;background:#5aa4e6"></div>
<div style="left:457px;top:1226px;width:1px;height:20px;background:#5aa4e6"></div>
<div style="left:535px;top:1226px;width:1px;height:20px;background:#5aa4e6"></div>
<div style="left:633px;top:1226px;width:1px;height:20px;background:#5aa4e6"></div>
<div style="left:731px;top:1226px;width:1px;height:20px;background:#5aa4e6"></div>
<div style="left:829px;top:1226px;width:1px;height:20px;background:#5aa4e6"></div>
<div style="left:927px;top:1226px;width:1px;height:20px;background:#5aa4e6"></div>
<div style="left:1143px;top:1226px;width:1px;height:20px;background:#5aa4e6"></div>
<div style="left:1241px;top:1226px;width:1px;height:20px;background:#5aa4e6"></div>
<div style="left:1339px;top:1226px;width:1px;height:20px;background:#5aa4e6"></div>
<svg style="left:19px;top:1228px;" width="14" height="17" viewBox="0 0 14 17"><path d="M0.5 0.5H8L12 4.5V15.5H0.5Z" fill="#fff" stroke="#999"/><circle cx="10" cy="13" r="3.5" fill="#2a90e0" stroke="#fff"/></svg>
<div style="left:38.5px;top:1229.0px;line-height:14px;white-space:nowrap;transform-origin:0 0;transform:scaleX(0.9075);font-size:12px;color:#fff">243723244</div>
<div style="left:-244.2px;width:600px;text-align:right;top:1229.0px;line-height:14px;white-space:nowrap;transform-origin:100% 0;transform:scaleX(0.8992);font-size:12px;color:#fff">2022.05.10 08:42:38</div>
<div style="left:-146.2px;width:600px;text-align:right;top:1229.0px;line-height:14px;white-space:nowrap;transform-origin:100% 0;transform:scaleX(0.9304);font-size:12px;color:#fff">buy</div>
<div style="left:-67.5px;width:600px;text-align:right;top:1229.0px;line-height:14px;white-space:nowrap;transform-origin:100% 0;transform:scaleX(0.8778);font-size:12px;color:#fff">1.00</div>
<div style="left:30px;width:600px;text-align:right;top:1229.0px;line-height:14px;white-space:nowrap;transform-origin:100% 0;transform:scaleX(0.9913);font-size:12px;color:#fff">usdjpyb</div>
<div style="left:127px;width:600px;text-align:right;top:1229.0px;line-height:14px;white-space:nowrap;transform-origin:100% 0;transform:scaleX(0.8761);font-size:12px;color:#fff">130.379</div>
<div style="left:226.70000000000005px;width:600px;text-align:right;top:1229.0px;line-height:14px;white-space:nowrap;transform-origin:100% 0;transform:scaleX(0.8923);font-size:12px;color:#fff">130.140</div>
<div style="left:323.6px;width:600px;text-align:right;top:1229.0px;line-height:14px;white-space:nowrap;transform-origin:100% 0;transform:scaleX(0.8761);font-size:12px;color:#fff">130.735</div>
<div style="left:540px;width:600px;text-align:right;top:1229.0px;line-height:14px;white-space:nowrap;transform-origin:100% 0;transform:scaleX(0.8965);font-size:12px;color:#fff">2022.05.10 09:12:21</div>
<div style="left:638.4000000000001px;width:600px;text-align:right;top:1229.0px;line-height:14px;white-space:nowrap;transform-origin:100% 0;transform:scaleX(0.8854);font-size:12px;color:#fff">130.378</div>
<div style="left:736px;width:600px;text-align:right;top:1229.0px;line-height:14px;white-space:nowrap;transform-origin:100% 0;transform:scaleX(0.8992);font-size:12px;color:#fff">0.00</div>
<div style="left:847px;width:600px;text-align:right;top:1229.0px;line-height:14px;white-space:nowrap;transform-origin:100% 0;transform:scaleX(0.8958);font-size:12px;color:#fff">-0.77</div>
<div style="left:17px;top:1246px;width:1435px;height:20px;background:#c8c8c8;background-image:repeating-conic-gradient(#c4c4c4 0 25%,#cccccc 0 50%);background-size:3px 3px"></div>
<svg style="left:23px;top:1251px;" width="10" height="10" viewBox="0 0 10 10"><circle cx="5" cy="5" r="4" fill="#ddd" stroke="#888"/></svg>
<div style="left:38.5px;top:1249.0px;line-height:14px;white-space:nowrap;transform-origin:0 0;transform:scaleX(1.0190);font-size:12px;font-weight:bold"><span class="j">損益計</span>: -6.77  <span class="j">クレジット計</span>: 0.00  <span class="j">入金計</span>: 100 000.00  <span class="j">出金計</span>: 0.00</div>
<div style="left:847.5px;width:600px;text-align:right;top:1249.0px;line-height:14px;white-space:nowrap;transform-origin:100% 0;transform:scaleX(1.0210);font-size:12px;font-weight:bold">99 993.23</div>
<div style="left:16px;top:1335px;width:1436px;height:1px;background:#000"></div>
<div style="left:138px;top:1335px;width:71px;height:20px;background:#fff;border:1px solid #000;border-top:none"></div>
<div style="left:16px;top:1335px;width:1436px;height:1px;background:#000"></div>
<div style="left:138px;top:1335px;width:71px;height:20px;background:#fff;border:1px solid #000;border-top:none"></div>
<div style="left:28px;top:1338.0px;line-height:14px;white-space:nowrap;transform-origin:0 0;transform:scaleX(1.1029);font-size:12px;color:#8a8a8a"><span class="j">取引</span></div>
<div style="left:75px;top:1338.0px;line-height:14px;white-space:nowrap;transform-origin:0 0;transform:scaleX(1.0621);font-size:12px;color:#8a8a8a"><span class="j">運用比率</span></div>
<div style="left:148px;top:1338.0px;line-height:14px;white-space:nowrap;transform-origin:0 0;transform:scaleX(1.0417);font-size:12px;color:#000"><span class="j">口座履歴</span></div>
<div style="left:219px;top:1338.0px;line-height:14px;white-space:nowrap;transform-origin:0 0;transform:scaleX(0.8068);font-size:12px;color:#8a8a8a"><span class="j">ニュース</span></div>
<div style="left:290.4px;top:1338.0px;line-height:14px;white-space:nowrap;transform-origin:0 0;transform:scaleX(0.9164);font-size:12px;color:#8a8a8a"><span class="j">アラーム設定</span></div>
<div style="left:377.7px;top:1338.0px;line-height:14px;white-space:nowrap;transform-origin:0 0;transform:scaleX(0.8088);font-size:12px;color:#8a8a8a"><span class="j">メールボックス</span></div>
<div style="left:473.8px;top:1338.0px;line-height:14px;white-space:nowrap;transform-origin:0 0;transform:scaleX(0.7386);font-size:12px;color:#8a8a8a"><span class="j">マーケット</span></div>
<div style="left:559.6px;top:1338.0px;line-height:14px;white-space:nowrap;transform-origin:0 0;transform:scaleX(1.0294);font-size:12px;color:#8a8a8a"><span class="j">記事</span></div>
<div style="left:604.7px;top:1338.0px;line-height:14px;white-space:nowrap;transform-origin:0 0;transform:scaleX(0.7386);font-size:12px;color:#8a8a8a"><span class="j">ライブラリ</span></div>
<div style="left:670px;top:1338.0px;line-height:14px;white-space:nowrap;transform-origin:0 0;transform:scaleX(0.8442);font-size:12px;color:#8a8a8a"><span class="j">エキスパート</span></div>
<div style="left:752px;top:1338.0px;line-height:14px;white-space:nowrap;transform-origin:0 0;transform:scaleX(1.0560);font-size:12px;color:#8a8a8a"><span class="j">操作履歴</span></div>
<div style="left:260px;top:1344.0px;line-height:10px;white-space:nowrap;transform-origin:0 0;transform:scaleX(1.1636);font-size:8.5px;color:#e02020;font-weight:bold">99</div>
<div style="left:449px;top:1344.0px;line-height:10px;white-space:nowrap;transform-origin:0 0;transform:scaleX(1.0578);font-size:8.5px;color:#e02020;font-weight:bold">7</div>
<div style="left:521px;top:1344.0px;line-height:10px;white-space:nowrap;transform-origin:0 0;transform:scaleX(1.1283);font-size:8.5px;color:#e02020;font-weight:bold">159</div>
<div style="left:65px;top:1338px;width:1px;height:14px;background:#808080"></div>
<div style="left:281px;top:1338px;width:1px;height:14px;background:#808080"></div>
<div style="left:368px;top:1338px;width:1px;height:14px;background:#808080"></div>
<div style="left:464px;top:1338px;width:1px;height:14px;background:#808080"></div>
<div style="left:548px;top:1338px;width:1px;height:14px;background:#808080"></div>
<div style="left:595px;top:1338px;width:1px;height:14px;background:#808080"></div>
<div style="left:660px;top:1338px;width:1px;height:14px;background:#808080"></div>
<div style="left:742px;top:1338px;width:1px;height:14px;background:#808080"></div>
<div style="left:815px;top:1338px;width:1px;height:14px;background:#808080"></div>
<div style="left:0px;top:1360px;width:1457px;height:25px;background:#f0f0f0"></div>
<div style="left:0px;top:1359px;width:1457px;height:1px;background:#fafafa"></div>
<div style="left:0px;top:1360px;width:1457px;height:1px;background:#a8a8a8"></div>
<div style="left:16px;top:1336px;width:1px;height:21px;background:#a0a0a0"></div>
<div style="left:0px;top:1384px;width:1457px;height:1px;background:#9a9a9a"></div>
<div style="left:3px;top:1366.0px;line-height:14px;white-space:nowrap;transform-origin:0 0;transform:scaleX(0.9011);font-size:12px">F1<span class="j">キーでヘルプが表示されます</span></div>
<div style="left:744px;top:1363px;width:1px;height:20px;background:#c8c8c8"></div>
<div style="left:860px;top:1363px;width:1px;height:20px;background:#c8c8c8"></div>
<div style="left:962px;top:1363px;width:1px;height:20px;background:#c8c8c8"></div>
<div style="left:1033px;top:1363px;width:1px;height:20px;background:#c8c8c8"></div>
<div style="left:1104px;top:1363px;width:1px;height:20px;background:#c8c8c8"></div>
<div style="left:1172px;top:1363px;width:1px;height:20px;background:#c8c8c8"></div>
<div style="left:1242px;top:1363px;width:1px;height:20px;background:#c8c8c8"></div>
<div style="left:1307px;top:1363px;width:1px;height:20px;background:#c8c8c8"></div>
<div style="left:749px;top:1366.0px;line-height:14px;white-space:nowrap;transform-origin:0 0;transform:scaleX(0.9995);font-size:12px">Default</div>
<svg style="left:1313px;top:1366px;" width="24" height="14" viewBox="0 0 24 14"><defs><linearGradient id="sg" x1="0" y1="0" x2="0" y2="1"><stop offset="0" stop-color="#8aa020"/><stop offset="1" stop-color="#1a3a7a"/></linearGradient></defs><rect x="0.0" y="0" width="1.3" height="14" fill="url(#sg)"/><rect x="2.3" y="0" width="1.3" height="14" fill="url(#sg)"/><rect x="4.6" y="0" width="1.3" height="14" fill="url(#sg)"/><rect x="6.9" y="0" width="1.3" height="14" fill="url(#sg)"/><rect x="9.2" y="0" width="1.3" height="14" fill="url(#sg)"/><rect x="11.5" y="0" width="1.3" height="14" fill="url(#sg)"/><rect x="13.8" y="0" width="1.3" height="14" fill="url(#sg)"/><rect x="16.1" y="3" width="1.3" height="11" fill="url(#sg)"/><rect x="18.4" y="3" width="1.3" height="11" fill="url(#sg)"/><rect x="20.7" y="3" width="1.3" height="11" fill="url(#sg)"/></svg>
<div style="left:1340px;top:1366.0px;line-height:14px;white-space:nowrap;transform-origin:0 0;transform:scaleX(0.9574);font-size:12px">33811/9 kb</div>
<svg style="left:1443px;top:1371px;" width="12" height="12" viewBox="0 0 12 12"><path d="M11 1L1 11M11 5L5 11M11 9L9 11" stroke="#b0b0b0"/></svg>
<div style="left:0;top:1377px;width:8px;height:8px;background:#b8c0cc"><div style="position:absolute;left:0;top:-1px;width:9px;height:8px;background:#f0f0f0;border-bottom-left-radius:7px;border-left:1px solid #9a9a9a;border-bottom:1px solid #9a9a9a"></div></div>
<div style="left:0px;top:0px;width:1px;height:1385px;background:#8a8a8a"></div>
<div style="left:1455px;top:0px;width:1px;height:1385px;background:#7c8698"></div>
<div style="left:1456px;top:0px;width:1px;height:1385px;background:#d8dce6"></div>
<div style="left:0px;top:0px;width:1457px;height:1px;background:#8c96a8"></div>
<div style="left:1446px;top:0;width:11px;height:11px;background:#a8b2d0"><div style="position:absolute;left:-1px;top:1px;width:11px;height:11px;background:#fff;border-top-right-radius:9px;border-top:1px solid #8c96a8;border-right:1px solid #7c8698"></div></div>
<div style="left:1453px;top:105px;width:2px;height:1255px;background:#f0f0f0"></div>
<div style="left:423px;top:384px;width:753px;height:379px;background:#f0f0f0;border:1px solid #9a9a9a;border-radius:7px;box-shadow:0 2px 10px rgba(0,0,0,.25);overflow:hidden"></div>
<div style="left:424px;top:385px;width:751px;height:29px;background:#fff;border-radius:6px 6px 0 0"></div>
<div style="left:431px;top:390.5px;line-height:16px;white-space:nowrap;transform-origin:0 0;transform:scaleX(0.8739);font-size:12.5px"><span class="j">オーダーの発注</span></div>
<div style="left:1056px;top:398px;width:11px;height:1px;background:#222"></div>
<div style="left:1102px;top:393px;width:10px;height:10px;border:1px solid #c8c8c8"></div>
<svg style="left:1147px;top:393px;" width="12" height="12" viewBox="0 0 12 12"><path d="M0.5 0.5L11.5 11.5M11.5 0.5L0.5 11.5" stroke="#222" stroke-width="1.1"/></svg>
<div style="left:431px;top:427px;width:299px;height:328px;background:#fff;border-top:2px solid #a0a0a0;border-left:2px solid #a0a0a0;border-right:1px solid #fff;border-bottom:1px solid #fff"></div>
<svg style="left:431px;top:427px" width="299" height="328" viewBox="431 427 299 328"><g font-family="Liberation Sans"><g stroke="#c4c4c4" stroke-dasharray="3,3" shape-rendering="crispEdges"><line x1="468.5" y1="432" x2="468.5" y2="750"/><line x1="500.5" y1="432" x2="500.5" y2="750"/><line x1="532.5" y1="432" x2="532.5" y2="750"/><line x1="564.5" y1="432" x2="564.5" y2="750"/><line x1="596.5" y1="432" x2="596.5" y2="750"/><line x1="628.5" y1="432" x2="628.5" y2="750"/><line x1="660.5" y1="432" x2="660.5" y2="750"/><line x1="436" y1="462.5" x2="686" y2="462.5"/><line x1="436" y1="494.5" x2="686" y2="494.5"/><line x1="436" y1="526.5" x2="686" y2="526.5"/><line x1="436" y1="558.5" x2="686" y2="558.5"/><line x1="436" y1="590.5" x2="686" y2="590.5"/><line x1="436" y1="622.5" x2="686" y2="622.5"/><line x1="436" y1="654.5" x2="686" y2="654.5"/><line x1="436" y1="686.5" x2="686" y2="686.5"/><line x1="436" y1="718.5" x2="686" y2="718.5"/></g><rect x="435.5" y="431.5" width="250" height="319" fill="none" stroke="#000" shape-rendering="crispEdges"/><line x1="686" y1="462.5" x2="690" y2="462.5" stroke="#000" shape-rendering="crispEdges"/><text transform="translate(691,465.7) scale(0.9130,1)" font-size="10" fill="#000" text-anchor="start" xml:space="preserve">130.332</text><line x1="686" y1="494.5" x2="690" y2="494.5" stroke="#000" shape-rendering="crispEdges"/><text transform="translate(691,497.5) scale(0.9130,1)" font-size="10" fill="#000" text-anchor="start" xml:space="preserve">130.330</text><line x1="686" y1="526.5" x2="690" y2="526.5" stroke="#000" shape-rendering="crispEdges"/><text transform="translate(691,529.6) scale(0.9130,1)" font-size="10" fill="#000" text-anchor="start" xml:space="preserve">130.329</text><line x1="686" y1="558.5" x2="690" y2="558.5" stroke="#000" shape-rendering="crispEdges"/><text transform="translate(691,561.5) scale(0.9130,1)" font-size="10" fill="#000" text-anchor="start" xml:space="preserve">130.327</text><line x1="686" y1="590.5" x2="690" y2="590.5" stroke="#000" shape-rendering="crispEdges"/><text transform="translate(691,593.6) scale(0.9130,1)" font-size="10" fill="#000" text-anchor="start" xml:space="preserve">130.325</text><line x1="686" y1="618.5" x2="690" y2="618.5" stroke="#000" shape-rendering="crispEdges"/><text transform="translate(691,622) scale(0.9130,1)" font-size="10" fill="#000" text-anchor="start" xml:space="preserve">130.323</text><line x1="686" y1="654.5" x2="690" y2="654.5" stroke="#000" shape-rendering="crispEdges"/><text transform="translate(691,657.5) scale(0.9130,1)" font-size="10" fill="#000" text-anchor="start" xml:space="preserve">130.321</text><line x1="686" y1="686.5" x2="690" y2="686.5" stroke="#000" shape-rendering="crispEdges"/><text transform="translate(691,689.6) scale(0.9130,1)" font-size="10" fill="#000" text-anchor="start" xml:space="preserve">130.320</text><line x1="686" y1="718.5" x2="690" y2="718.5" stroke="#000" shape-rendering="crispEdges"/><text transform="translate(691,721.5) scale(0.9130,1)" font-size="10" fill="#000" text-anchor="start" xml:space="preserve">130.318</text><line x1="686" y1="746.5" x2="690" y2="746.5" stroke="#000" shape-rendering="crispEdges"/><text transform="translate(691,750) scale(0.9130,1)" font-size="10" fill="#000" text-anchor="start" xml:space="preserve">130.316</text><polyline points="436.5,591 437.5,591 437.5,560 438.5,520 439.5,486 440.5,486 440.5,505 441.5,530 441.5,538.5 686,538.5" fill="none" stroke="#f05a5a" stroke-width="1"/><polyline points="436.5,698 436.5,690 437.5,660 437.5,610 438.5,590 439.5,573 440.5,573 440.5,600 441.5,640 442.5,626.5 686,626.5" fill="none" stroke="#1a66e0" stroke-width="1"/><rect x="687" y="532.5" width="41" height="12" fill="#f26b6b"/><text transform="translate(691,542.5) scale(0.9130,1)" font-size="10" fill="#fff" text-anchor="start" xml:space="preserve">130.328</text><rect x="687" y="620.5" width="41" height="12" fill="#1a6ae8"/><text transform="translate(691,630.5) scale(0.9130,1)" font-size="10" fill="#fff" text-anchor="start" xml:space="preserve">130.323</text><text transform="translate(438,442) scale(0.9108,1)" font-size="10" fill="#000" text-anchor="start" xml:space="preserve">USDJPYb</text></g></svg>
<div style="left:227px;width:600px;text-align:right;top:430.5px;line-height:14px;white-space:nowrap;transform-origin:100% 0;transform:scaleX(0.8880);font-size:12px"><span class="j">通貨ペア</span> :</div>
<div style="left:836px;top:428px;width:322px;height:20px;background:#fafafa;border:1px solid #cfcfcf;border-radius:2px"></div>
<div style="left:839.4px;top:431.0px;line-height:14px;white-space:nowrap;transform-origin:0 0;transform:scaleX(0.8569);font-size:12px">USDJPYb, US Dollar vs Japanese Yen</div>
<svg style="left:1145px;top:435px;" width="10" height="6" viewBox="0 0 10 6"><path d="M0.5 0.5L5 5L9.5 0.5" fill="none" stroke="#444" stroke-width="1.1"/></svg>
<div style="left:227px;width:600px;text-align:right;top:456.0px;line-height:14px;white-space:nowrap;transform-origin:100% 0;transform:scaleX(0.9953);font-size:12px"><span class="j">数量</span> :</div>
<div style="left:836px;top:454px;width:105px;height:21px;background:#fff;border:1px solid #7a7a7a;border-radius:2px"></div>
<div style="left:920px;top:455px;width:20px;height:19px;background:#fafafa"></div>
<div style="left:842.7px;top:457.0px;line-height:14px;white-space:nowrap;transform-origin:0 0;transform:scaleX(0.8864);font-size:12px">1.00</div>
<svg style="left:926px;top:461px;" width="10" height="6" viewBox="0 0 10 6"><path d="M0.5 0.5L5 5L9.5 0.5" fill="none" stroke="#444" stroke-width="1.1"/></svg>
<div style="left:227px;width:600px;text-align:right;top:482.0px;line-height:14px;white-space:nowrap;transform-origin:100% 0;transform:scaleX(0.9449);font-size:12px"><span class="j">決済逆指値</span>(S/L)</div>
<div style="left:836px;top:480px;width:88px;height:19px;background:#fff;border:1px solid #cfcfcf;border-bottom:1px solid #8a8a8a"></div>
<div style="left:318.5px;width:600px;text-align:right;top:482.5px;line-height:14px;white-space:nowrap;transform-origin:100% 0;transform:scaleX(0.8877);font-size:12px">130.200</div>
<div style="left:924px;top:480px;width:16px;height:19px;background:#f0f0f0;border:1px solid #b0b0b0"></div>
<svg style="left:928px;top:483px;" width="8" height="4" viewBox="0 0 8 4"><path d="M0 4L4 0L8 4Z" fill="#333"/></svg>
<div style="left:926px;top:489px;width:12px;height:1px;background:#c0c0c0"></div>
<svg style="left:928px;top:492px;" width="8" height="4" viewBox="0 0 8 4"><path d="M0 0L4 4L8 0Z" fill="#333"/></svg>
<div style="left:445.29999999999995px;width:600px;text-align:right;top:482.0px;line-height:14px;white-space:nowrap;transform-origin:100% 0;transform:scaleX(0.9455);font-size:12px"><span class="j">決済指値</span>(T/P)</div>
<div style="left:1053px;top:480px;width:88px;height:19px;background:#fff;border:1px solid #cfcfcf;border-bottom:1px solid #8a8a8a"></div>
<div style="left:535.3px;width:600px;text-align:right;top:482.5px;line-height:14px;white-space:nowrap;transform-origin:100% 0;transform:scaleX(0.8992);font-size:12px">130.535</div>
<div style="left:1141px;top:480px;width:16px;height:19px;background:#f0f0f0;border:1px solid #b0b0b0"></div>
<svg style="left:1145px;top:483px;" width="8" height="4" viewBox="0 0 8 4"><path d="M0 4L4 0L8 4Z" fill="#333"/></svg>
<div style="left:1143px;top:489px;width:12px;height:1px;background:#c0c0c0"></div>
<svg style="left:1145px;top:492px;" width="8" height="4" viewBox="0 0 8 4"><path d="M0 0L4 4L8 0Z" fill="#333"/></svg>
<div style="left:227px;width:600px;text-align:right;top:507.5px;line-height:14px;white-space:nowrap;transform-origin:100% 0;transform:scaleX(0.7191);font-size:12px"><span class="j">コメント</span> :</div>
<div style="left:836px;top:506px;width:322px;height:20px;background:#fff;border:1px solid #cfcfcf;border-bottom:1px solid #8a8a8a;border-radius:2px"></div>
<div style="left:227px;width:600px;text-align:right;top:535.0px;line-height:14px;white-space:nowrap;transform-origin:100% 0;transform:scaleX(0.9887);font-size:12px"><span class="j">注文種別</span> :</div>
<div style="left:836px;top:532px;width:322px;height:20px;background:#fafafa;border:1px solid #cfcfcf;border-radius:2px"></div>
<div style="left:839.7px;top:535.0px;line-height:14px;white-space:nowrap;transform-origin:0 0;transform:scaleX(0.9186);font-size:12px"><span class="j">指値注文</span>(Pending Order)</div>
<svg style="left:1145px;top:539px;" width="10" height="6" viewBox="0 0 10 6"><path d="M0.5 0.5L5 5L9.5 0.5" fill="none" stroke="#444" stroke-width="1.1"/></svg>
<div style="left:738px;top:567px;width:428px;height:187px;border:1px solid #dcdcdc;border-radius:2px"></div>
<div style="left:744px;top:559px;width:178px;height:14px;background:#f0f0f0"></div>
<div style="left:746.5px;top:559.5px;line-height:14px;white-space:nowrap;transform-origin:0 0;transform:scaleX(0.9333);font-size:12px"><span class="j">指値または逆指値注文</span> (<span class="j">新規注文</span>)</div>
<div style="left:227px;width:600px;text-align:right;top:588.5px;line-height:14px;white-space:nowrap;transform-origin:100% 0;transform:scaleX(0.9887);font-size:12px"><span class="j">注文種別</span> :</div>
<div style="left:836px;top:585px;width:142px;height:20px;background:#fafafa;border:1px solid #cfcfcf;border-radius:2px"></div>
<div style="left:839.4px;top:588.0px;line-height:14px;white-space:nowrap;transform-origin:0 0;transform:scaleX(0.8511);font-size:12px">Buy Limit</div>
<svg style="left:964px;top:592px;" width="10" height="6" viewBox="0 0 10 6"><path d="M0.5 0.5L5 5L9.5 0.5" fill="none" stroke="#444" stroke-width="1.1"/></svg>
<div style="left:985.4px;top:588.5px;line-height:14px;white-space:nowrap;transform-origin:0 0;transform:scaleX(0.8426);font-size:12px">USDJPYb 1.00</div>
<div style="left:227px;width:600px;text-align:right;top:620.0px;line-height:14px;white-space:nowrap;transform-origin:100% 0;transform:scaleX(0.9471);font-size:12px"><span class="j">価格</span> :</div>
<div style="left:836px;top:617px;width:127px;height:20px;background:#fff;border:1px solid #cfcfcf;border-bottom:2px solid #0060c0"></div>
<div style="left:357.29999999999995px;width:600px;text-align:right;top:620.0px;line-height:14px;white-space:nowrap;transform-origin:100% 0;transform:scaleX(0.8946);font-size:12px">130.250</div>
<div style="left:962px;top:617px;width:16px;height:20px;background:#f0f0f0;border:1px solid #b0b0b0"></div>
<svg style="left:966px;top:620px;" width="8" height="4" viewBox="0 0 8 4"><path d="M0 4L4 0L8 4Z" fill="#333"/></svg>
<div style="left:964px;top:627px;width:12px;height:1px;background:#c0c0c0"></div>
<svg style="left:966px;top:630px;" width="8" height="4" viewBox="0 0 8 4"><path d="M0 0L4 4L8 0Z" fill="#333"/></svg>
<div style="left:983px;top:612px;width:171px;height:30px;border:3px solid #f80000"></div>
<div style="left:987px;top:615px;width:163px;height:23px;background:#a2c6f8;border:1px solid #1a6ad8;border-radius:4px;box-shadow:inset 0 0 0 1px #e8f2ff"></div>
<div style="left:767.7px;width:600px;text-align:center;top:619.5px;line-height:14px;white-space:nowrap;transform-origin:50% 0;transform:scaleX(1.0008);font-size:12px"><span class="j">発注</span></div>
<div style="left:227px;width:600px;text-align:right;top:653.5px;line-height:14px;white-space:nowrap;transform-origin:100% 0;transform:scaleX(0.9618);font-size:12px"><span class="j">有効期限</span> :</div>
<div style="left:836px;top:650px;width:142px;height:23px;background:#f0f0f0;border:1px solid #b8b8b8;border-radius:2px"></div>
<div style="left:841px;top:655px;width:13px;height:13px;background:#fff;border:1px solid #555;border-radius:3px"></div>
<div style="left:859px;top:654.0px;line-height:14px;white-space:nowrap;transform-origin:0 0;transform:scaleX(0.9718);font-size:11.5px;color:#8a8a8a">2022.05.10 10:26</div>
<div style="left:953px;top:651px;width:24px;height:21px;background:#f0f0f0"></div>
<svg style="left:958px;top:658px;" width="10" height="6" viewBox="0 0 10 6"><path d="M0.5 0.5L5 5L9.5 0.5" fill="none" stroke="#444" stroke-width="1.1"/></svg>
<div style="left:817.3px;top:697.5px;line-height:14px;white-space:nowrap;transform-origin:0 0;transform:scaleX(0.8509);font-size:12px"><span class="j">現在価格から</span> 30 <span class="j">ポイント圏内の注文は発注できません。</span></div>
<svg style="left:1113px;top:626px;" width="14" height="22" viewBox="0 0 14 22"><path d="M1 1V17L5 13L8 20L11 19L8 12H13Z" fill="#fff" stroke="#000" stroke-width="1"/></svg>
<div style="left:1157px;top:604px;width:44px;height:44px;border-radius:50%;background:#f00a0a;color:#fff;font-size:27px;line-height:44px;text-align:center;letter-spacing:-0.5px">31</div>
</body></html>
